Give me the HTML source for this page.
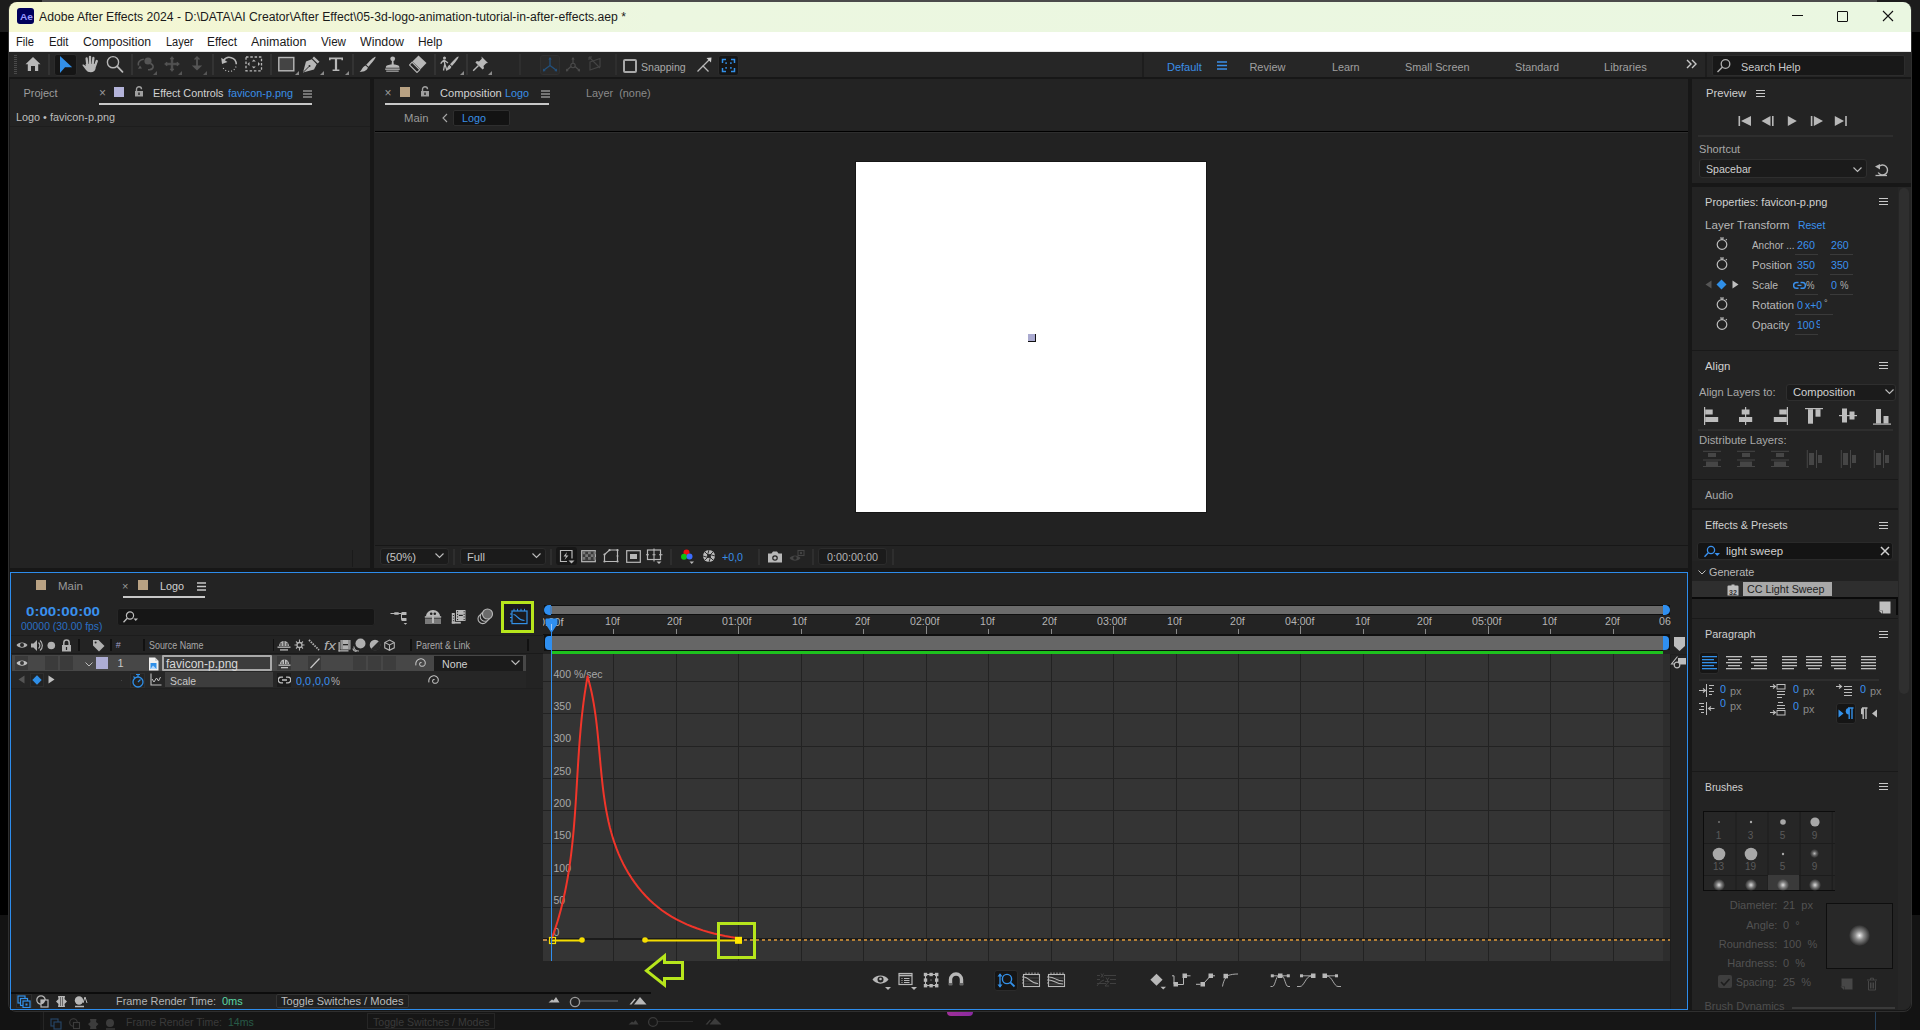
<!DOCTYPE html><html><head><meta charset="utf-8"><title>AE</title><style>*{margin:0;padding:0;box-sizing:border-box}
html,body{width:1920px;height:1030px;overflow:hidden;background:#000}
body{position:relative;font-family:"Liberation Sans",sans-serif}
body>div,body>span,body>svg{position:absolute}
span{white-space:pre}
</style></head><body>
<div style="left:0px;top:0px;width:1920px;height:1030px;background:#000;"></div>
<div style="left:0px;top:0px;width:1920px;height:32px;background:#1c1c1c;"></div>
<div style="left:42px;top:0px;width:1835px;height:2px;background:#4b4b4b;"></div>
<div style="left:0px;top:915px;width:1920px;height:115px;background:#131313;"></div>
<div style="left:40px;top:1012px;width:1860px;height:18px;background:#161616;"></div>
<div style="left:43px;top:1012px;width:1px;height:18px;background:#262626;"></div>
<svg style="left:50px;top:1018px;" width="14" height="12" viewBox="0 0 14 12"><rect x="1" y="1" width="7" height="7" fill="none" stroke="#27476a" stroke-width="1.1"/><rect x="4" y="4" width="7" height="7" fill="#171717" stroke="#27476a" stroke-width="1.1"/></svg>
<svg style="left:69px;top:1018px;" width="12" height="12" viewBox="0 0 12 12"><circle cx="4.5" cy="4.5" r="3.8" fill="none" stroke="#3c3c3c" stroke-width="1.1"/><rect x="4.5" y="4.5" width="6" height="6" fill="#171717" stroke="#3c3c3c" stroke-width="1.1"/></svg>
<svg style="left:87px;top:1018px;" width="12" height="12" viewBox="0 0 12 12"><path d="M3 1L3.5 4L1 6L3.5 8.5L3 11H9.5L9 8.5L11.5 6L9 4L9.5 1Z" fill="#3c3c3c"/></svg>
<svg style="left:105px;top:1018px;" width="13" height="12" viewBox="0 0 13 12"><circle cx="5" cy="5" r="4" fill="#3c3c3c"/><path d="M1 11H10" stroke="#3c3c3c" stroke-width="1.4"/></svg>
<span style="left:126.00px;top:1017.19px;font-size:11px;line-height:11px;color:#3a3a3a;transform:scaleX(0.9517);transform-origin:0 0;">Frame Render Time:</span>
<span style="left:227.60px;top:1017.19px;font-size:11px;line-height:11px;color:#285a47;transform:scaleX(0.9591);transform-origin:0 0;">14ms</span>
<div style="left:367px;top:1013px;width:127.6px;height:16px;background:none;border:1px solid #262626"></div>
<span style="left:373.40px;top:1017.19px;font-size:11px;line-height:11px;color:#3a3a3a;transform:scaleX(0.9583);transform-origin:0 0;">Toggle Switches / Modes</span>
<svg style="left:628px;top:1019px;" width="11" height="6" viewBox="0 0 11 6"><path d="M0.5 5.5L4 2.5L5.5 3.5L7.5 1L10.5 5.5Z" fill="#3c3c3c"/></svg>
<div style="left:657px;top:1021px;width:36px;height:1.2px;background:#2a2a2a;"></div>
<svg style="left:647px;top:1016px;" width="12" height="12" viewBox="0 0 12 12"><circle cx="6" cy="6" r="4.4" fill="#171717" stroke="#3a3a3a" stroke-width="1.3"/></svg>
<svg style="left:705px;top:1017px;" width="17" height="8" viewBox="0 0 17 8"><path d="M0.5 7.5L5 2.5L6 3.2L2.5 7.5Z M4.5 7.5L10 1L16.5 7.5Z" fill="#3c3c3c"/></svg>
<div style="left:1875px;top:1010px;width:1px;height:20px;background:#26405a;"></div>
<div style="left:8px;top:2px;width:1904px;height:1010px;background:#171717;border:1px solid #2f2f2f;border-radius:8px"></div>
<div style="left:947px;top:1012px;width:26px;height:4px;border-radius:0 0 13px 13px;background:linear-gradient(90deg,#a0309a,#8a2aa0)"></div>
<div style="left:9px;top:2px;width:1902px;height:30px;background:linear-gradient(90deg,#f5f7d1 0%,#f1f6d7 16%,#ecf7e0 34%,#eaf7e1 100%);border-radius:8px 8px 0 0"></div>
<div style="left:17px;top:8px;width:17px;height:16px;background:#00005b;border-radius:3px"></div>
<span style="left:19.50px;top:12.46px;font-size:9.5px;line-height:9.5px;color:#9999ff;font-weight:bold;transform:scaleX(1.0705);transform-origin:0 0;">Ae</span>
<span style="left:39.00px;top:11.34px;font-size:12px;line-height:12px;color:#1a1a1a;transform:scaleX(1.0158);transform-origin:0 0;">Adobe After Effects 2024 - D:\DATA\AI Creator\After Effect\05-3d-logo-animation-tutorial-in-after-effects.aep *</span>
<div style="left:1792px;top:15px;width:11px;height:1px;background:#111;"></div>
<div style="left:1837px;top:11px;width:11px;height:11px;background:none;border:1px solid #111;border-radius:1px"></div>
<svg style="left:1882px;top:10px;" width="12" height="12" viewBox="0 0 12 12"><path d="M1 1L11 11M11 1L1 11" stroke="#111" stroke-width="1.1"/></svg>
<div style="left:9px;top:32px;width:1902px;height:19px;background:#ffffff;"></div>
<div style="left:9px;top:51px;width:1902px;height:1px;background:#e6e6e6;"></div>
<span style="left:16.00px;top:36.34px;font-size:12px;line-height:12px;color:#1a1a1a;transform:scaleX(0.9309);transform-origin:0 0;">File</span>
<span style="left:48.50px;top:36.34px;font-size:12px;line-height:12px;color:#1a1a1a;transform:scaleX(0.9430);transform-origin:0 0;">Edit</span>
<span style="left:82.50px;top:36.34px;font-size:12px;line-height:12px;color:#1a1a1a;transform:scaleX(1.0195);transform-origin:0 0;">Composition</span>
<span style="left:165.50px;top:36.34px;font-size:12px;line-height:12px;color:#1a1a1a;transform:scaleX(0.9161);transform-origin:0 0;">Layer</span>
<span style="left:207.00px;top:36.34px;font-size:12px;line-height:12px;color:#1a1a1a;transform:scaleX(0.9848);transform-origin:0 0;">Effect</span>
<span style="left:251.00px;top:36.34px;font-size:12px;line-height:12px;color:#1a1a1a;transform:scaleX(1.0400);transform-origin:0 0;">Animation</span>
<span style="left:321.00px;top:36.34px;font-size:12px;line-height:12px;color:#1a1a1a;transform:scaleX(0.9692);transform-origin:0 0;">View</span>
<span style="left:360.00px;top:36.34px;font-size:12px;line-height:12px;color:#1a1a1a;transform:scaleX(1.0309);transform-origin:0 0;">Window</span>
<span style="left:418.00px;top:36.34px;font-size:12px;line-height:12px;color:#1a1a1a;transform:scaleX(0.9927);transform-origin:0 0;">Help</span>
<div style="left:9px;top:52px;width:1902px;height:25px;background:#262626;"></div>
<svg style="left:14px;top:55px;" width="3" height="20" viewBox="0 0 3 20"><rect x="0" y="0" width="3" height="1" fill="#4a4a4a"/><rect x="0" y="2" width="3" height="1" fill="#4a4a4a"/><rect x="0" y="4" width="3" height="1" fill="#4a4a4a"/><rect x="0" y="6" width="3" height="1" fill="#4a4a4a"/><rect x="0" y="8" width="3" height="1" fill="#4a4a4a"/><rect x="0" y="10" width="3" height="1" fill="#4a4a4a"/><rect x="0" y="12" width="3" height="1" fill="#4a4a4a"/><rect x="0" y="14" width="3" height="1" fill="#4a4a4a"/><rect x="0" y="16" width="3" height="1" fill="#4a4a4a"/><rect x="0" y="18" width="3" height="1" fill="#4a4a4a"/></svg>
<svg style="left:25px;top:56px;" width="16" height="16" viewBox="0 0 16 16"><path d="M8 1L0.5 8.2H2.8V15H6V10H10V15H13.2V8.2H15.5Z" fill="#b8b8b8"/></svg>
<div style="left:48px;top:54px;width:2px;height:21px;background:#333;"></div>
<div style="left:53.75px;top:53.6px;width:22.75px;height:22px;background:#151515;border:1px solid #2b2b2b;border-radius:3px"></div>
<svg style="left:59px;top:55px;" width="14" height="19" viewBox="0 0 14 19"><path d="M1 1L13.2 12.3H6L1 18Z" fill="#3390e8"/></svg>
<svg style="left:81px;top:55px;" width="18" height="18" viewBox="0 0 18 18"><path d="M5.6 3.5L6.4 10M9 1.8V10M12.4 2.8L11.6 10M15.8 6L14 11" stroke="#b8b8b8" stroke-width="2.3" stroke-linecap="round" fill="none"/><path d="M4.5 9H15L14.6 13.5C14 16 12.5 17.3 9.8 17.3C7.5 17.3 6 16.5 4.8 14.8L1.6 10.6C1.2 10 1.8 9.2 2.6 9.6L4.8 11Z" fill="#b8b8b8"/></svg>
<svg style="left:105px;top:55px;" width="19" height="19" viewBox="0 0 19 19"><circle cx="8" cy="7.2" r="5.6" fill="none" stroke="#b8b8b8" stroke-width="1.4"/><path d="M12.2 11.4L17.5 16.8" stroke="#b8b8b8" stroke-width="1.8" stroke-linecap="round"/></svg>
<div style="left:131px;top:54px;width:2px;height:21px;background:#333;"></div>
<svg style="left:137px;top:56px;" width="20" height="16" viewBox="0 0 20 16"><circle cx="11" cy="5" r="3.6" fill="#555555"/><path d="M6.8 3.2C3 3.6 0.5 6 1.6 9.4" fill="none" stroke="#555555" stroke-width="1.6"/><path d="M3 9.5L5 12.5L1 12.8Z" fill="#555555"/><path d="M13.5 7.5C17 9 17.4 13 12.5 13.8H11" fill="none" stroke="#555555" stroke-width="1.6"/></svg>
<svg style="left:153px;top:71px;" width="4" height="4" viewBox="0 0 4 4"><path d="M4 0V4H0Z" fill="#555"/></svg>
<svg style="left:164px;top:56px;" width="16" height="16" viewBox="0 0 16 16"><path d="M8 0.5L10 3H8.8V7.2H13V6L15.5 8L13 10V8.8H8.8V13H10L8 15.5L6 13H7.2V8.8H3V10L0.5 8L3 6V7.2H7.2V3H6Z" fill="#555555" stroke="#555555" stroke-width="0.6"/></svg>
<svg style="left:178px;top:71px;" width="4" height="4" viewBox="0 0 4 4"><path d="M4 0V4H0Z" fill="#555"/></svg>
<svg style="left:191px;top:56px;" width="12" height="16" viewBox="0 0 12 16"><path d="M3.5 3.5L6 1L8.5 3.5" stroke="#555555" stroke-width="1.4" fill="none"/><path d="M6 1V10" stroke="#555555" stroke-width="1.8"/><path d="M0.8 9.5H11.2L6 14.5Z" fill="#555555"/></svg>
<svg style="left:203px;top:71px;" width="4" height="4" viewBox="0 0 4 4"><path d="M4 0V4H0Z" fill="#555"/></svg>
<div style="left:212px;top:54px;width:2px;height:21px;background:#333;"></div>
<svg style="left:220px;top:55px;" width="19" height="19" viewBox="0 0 19 19"><path d="M3.5 5.5A7 7 0 0 1 16.3 9.2" fill="none" stroke="#b8b8b8" stroke-width="1.5"/><path d="M1.2 2.8L2 9L7.5 7Z" fill="#b8b8b8"/><path d="M16 11.5A7 7 0 0 1 3 12.5" fill="none" stroke="#b8b8b8" stroke-width="1.2" stroke-dasharray="1 2"/></svg>
<svg style="left:245px;top:56px;" width="18" height="16" viewBox="0 0 18 16"><rect x="1" y="1" width="15.5" height="13.8" fill="none" stroke="#b8b8b8" stroke-width="1.3" stroke-dasharray="2.5 1.8"/><path d="M8.8 3.5L10.8 5.5H6.8Z M8.8 12.5L10.8 10.5H6.8Z M2.5 8L4.5 6V10Z M15 8L13 6V10Z" fill="#b8b8b8"/></svg>
<div style="left:270px;top:54px;width:2px;height:21px;background:#333;"></div>
<svg style="left:277px;top:56px;" width="18" height="16" viewBox="0 0 18 16"><rect x="1.8" y="1.5" width="15" height="13.3" fill="#444" stroke="#b8b8b8" stroke-width="1.4"/></svg>
<svg style="left:295px;top:71px;" width="4" height="4" viewBox="0 0 4 4"><path d="M4 0V4H0Z" fill="#8a8a8a"/></svg>
<svg style="left:302px;top:56px;" width="19" height="17" viewBox="0 0 19 17"><path d="M12 0.5L17.5 5.8L15.7 7.6L10.3 2.3Z" fill="#b8b8b8"/><path d="M9.8 3.3L14.7 8.2L12 13.5L1 16.5L4 5.5Z" fill="#b8b8b8"/><path d="M1.5 16L7 10.5" stroke="#262626" stroke-width="1"/><circle cx="7.5" cy="10" r="1" fill="#262626"/></svg>
<svg style="left:320px;top:71px;" width="4" height="4" viewBox="0 0 4 4"><path d="M4 0V4H0Z" fill="#8a8a8a"/></svg>
<svg style="left:328px;top:56px;" width="16" height="16" viewBox="0 0 16 16"><path d="M1 1.5H15V4.3H13.4V3.2H9.1V13.4H11.4V15H4.6V13.4H6.9V3.2H2.6V4.3H1Z" fill="#b8b8b8"/></svg>
<svg style="left:345px;top:71px;" width="4" height="4" viewBox="0 0 4 4"><path d="M4 0V4H0Z" fill="#8a8a8a"/></svg>
<div style="left:352px;top:54px;width:2px;height:21px;background:#333;"></div>
<svg style="left:359px;top:56px;" width="18" height="17" viewBox="0 0 18 17"><path d="M16.5 0.8C17.5 1.5 12 8 9.5 10.8L7.2 8.8C9.8 6 15.5 0 16.5 0.8Z" fill="#b8b8b8"/><path d="M6.5 9.5L8.9 11.5C8.2 14 6 15.8 0.5 16C2.5 14.8 3 11.3 6.5 9.5Z" fill="#b8b8b8"/></svg>
<svg style="left:384px;top:56px;" width="18" height="16" viewBox="0 0 18 16"><circle cx="8.7" cy="2.8" r="2.4" fill="#b8b8b8"/><path d="M8 4.5H9.4L9.8 8.5C12.5 8.8 15.5 8.8 15.5 11.8H1.8C1.8 8.8 5 8.8 7.6 8.5Z" fill="#b8b8b8"/><rect x="1.2" y="12.5" width="14.5" height="1.3" fill="#b8b8b8"/><rect x="2.2" y="14.6" width="12.5" height="1.1" fill="#b8b8b8"/></svg>
<svg style="left:409px;top:55px;" width="19" height="18" viewBox="0 0 19 18"><path d="M9.5 0.5L17.5 8L11.5 14.2L3.4 6.6Z" fill="#b8b8b8"/><path d="M3 7.2L10.8 14.8L8 17.5L0.5 10Z" fill="none" stroke="#b8b8b8" stroke-width="1.1"/></svg>
<div style="left:434px;top:54px;width:2px;height:21px;background:#333;"></div>
<svg style="left:439px;top:56px;" width="22" height="17" viewBox="0 0 22 17"><circle cx="5.5" cy="2" r="1.5" fill="#b8b8b8"/><path d="M5 4L2.5 6.5L1.8 7.8M5 4L5.8 8L4.5 14.5M5.8 8L8 14.5M5 4L9 7" fill="none" stroke="#b8b8b8" stroke-width="1.3"/><path d="M19.5 0.5C20.5 1.2 15.5 7.5 13 10L11 8.2C13.5 5.5 18.5 -0.2 19.5 0.5Z" fill="#b8b8b8"/><path d="M10.3 8.8L12.4 10.7C11.8 13 9.8 14 6.8 14.5C8.5 13 8 10.5 10.3 8.8Z" fill="#b8b8b8"/></svg>
<svg style="left:460px;top:71px;" width="4" height="4" viewBox="0 0 4 4"><path d="M4 0V4H0Z" fill="#8a8a8a"/></svg>
<div style="left:466px;top:54px;width:2px;height:21px;background:#333;"></div>
<svg style="left:472px;top:56px;" width="17" height="16" viewBox="0 0 17 16"><path d="M9.5 0.5L16 7L14.2 7.2L11.5 10L12 12.2L10.6 13.6L3.4 6.4L4.8 5L7 5.5L9.8 2.8Z" fill="#b8b8b8"/><path d="M6.5 9.5L1.2 14.8" stroke="#b8b8b8" stroke-width="1.4"/></svg>
<svg style="left:488px;top:71px;" width="4" height="4" viewBox="0 0 4 4"><path d="M4 0V4H0Z" fill="#8a8a8a"/></svg>
<div style="left:519px;top:54px;width:2px;height:21px;background:#2e2e2e;"></div>
<div style="left:540px;top:55px;width:20.4px;height:20px;background:#2a2a2a;border:1px solid #303030;border-radius:3px"></div>
<svg style="left:541px;top:56px;" width="18" height="18" viewBox="0 0 18 18"><path d="M9 2V9.5M9 9.5L3 14M9 9.5L15 14" stroke="#23507c" stroke-width="1.3" fill="none"/><path d="M7.3 3.5L9 1L10.7 3.5Z M2 12.5L2 15.5L4.8 15Z M16 12.5L16 15.5L13.2 15Z" fill="#23507c"/></svg>
<svg style="left:564px;top:56px;" width="18" height="18" viewBox="0 0 18 18"><path d="M9 2V7.5M7 10.5L3 14M11 10.5L15 14" stroke="#4a4a4a" stroke-width="1.2" fill="none"/><circle cx="9" cy="9.5" r="2.2" fill="none" stroke="#4a4a4a" stroke-width="1.1"/><path d="M7.3 3.5L9 1L10.7 3.5Z M2 12.5L2 15.5L4.8 15Z M16 12.5L16 15.5L13.2 15Z" fill="#4a4a4a"/></svg>
<svg style="left:588px;top:56px;" width="16" height="16" viewBox="0 0 16 16"><path d="M2 6L12 2.5V10.5L2 14Z" fill="none" stroke="#444" stroke-width="1.1"/><path d="M1 1L12 12M1 1V4M1 1H4" stroke="#444" stroke-width="1.1" fill="none"/></svg>
<div style="left:615px;top:54px;width:2px;height:21px;background:#2e2e2e;"></div>
<div style="left:623.4px;top:59px;width:13.6px;height:13.5px;background:none;border:2px solid #a8a8a8;border-radius:2px"></div>
<span style="left:641.00px;top:61.99px;font-size:11px;line-height:11px;color:#a8a8a8;transform:scaleX(0.9615);transform-origin:0 0;">Snapping</span>
<svg style="left:696px;top:56px;" width="17" height="17" viewBox="0 0 17 17"><path d="M1.5 15.5L7 10L12.5 15.5" stroke="#b8b8b8" stroke-width="1.3" fill="none"/><path d="M7 10L14 3" stroke="#b8b8b8" stroke-width="1.2"/><path d="M10.5 2L15.5 1.5L15 6.5Z" fill="#d0d0d0"/></svg>
<div style="left:718px;top:55px;width:21px;height:21px;background:#151515;border:1px solid #2b2b2b;border-radius:3px"></div>
<svg style="left:721px;top:58px;" width="15" height="15" viewBox="0 0 15 15"><path d="M1.5 5V1.5H5M10 1.5H13.5V5M13.5 10V13.5H10M5 13.5H1.5V10" stroke="#3390e8" stroke-width="1.5" fill="none"/><rect x="4.3" y="4.3" width="1.6" height="1.6" fill="#3390e8"/><rect x="9.1" y="4.3" width="1.6" height="1.6" fill="#3390e8"/><rect x="4.3" y="9.1" width="1.6" height="1.6" fill="#3390e8"/><rect x="9.1" y="9.1" width="1.6" height="1.6" fill="#3390e8"/></svg>
<div style="left:1142px;top:53px;width:2px;height:24px;background:#1d1d1d;"></div>
<span style="left:1167.00px;top:61.69px;font-size:11px;line-height:11px;color:#3b8fe8;">Default</span>
<svg style="left:1217px;top:61px;" width="10" height="9" viewBox="0 0 10 9"><path d="M0 1H10M0 4.5H10M0 8H10" stroke="#3b8fe8" stroke-width="1.3"/></svg>
<span style="left:1249.40px;top:61.69px;font-size:11px;line-height:11px;color:#a0a0a0;">Review</span>
<span style="left:1332.40px;top:61.69px;font-size:11px;line-height:11px;color:#a0a0a0;transform:scaleX(0.9810);transform-origin:0 0;">Learn</span>
<span style="left:1405.00px;top:61.69px;font-size:11px;line-height:11px;color:#a0a0a0;transform:scaleX(0.9860);transform-origin:0 0;">Small Screen</span>
<span style="left:1515.00px;top:61.69px;font-size:11px;line-height:11px;color:#a0a0a0;transform:scaleX(0.9855);transform-origin:0 0;">Standard</span>
<span style="left:1604.00px;top:61.69px;font-size:11px;line-height:11px;color:#a0a0a0;transform:scaleX(1.0145);transform-origin:0 0;">Libraries</span>
<svg style="left:1686px;top:59px;" width="12" height="10" viewBox="0 0 12 10"><path d="M1 1L5 5L1 9M6 1L10 5L6 9" stroke="#c8c8c8" stroke-width="1.4" fill="none"/></svg>
<div style="left:1705px;top:53px;width:2px;height:24px;background:#1d1d1d;"></div>
<div style="left:1712px;top:55px;width:193px;height:21px;background:#181818;border:1px solid #2c2c2c;border-radius:2px"></div>
<svg style="left:1716px;top:58px;" width="16" height="16" viewBox="0 0 16 16"><circle cx="9.5" cy="6" r="4.3" fill="none" stroke="#b0b0b0" stroke-width="1.3"/><path d="M6.5 9L1.5 14" stroke="#b0b0b0" stroke-width="1.5"/></svg>
<span style="left:1741.00px;top:61.69px;font-size:11px;line-height:11px;color:#c8c8c8;transform:scaleX(0.9829);transform-origin:0 0;">Search Help</span>
<div style="left:10px;top:79px;width:360px;height:489px;background:#232323;"></div>
<span style="left:23.40px;top:87.99px;font-size:11px;line-height:11px;color:#9c9c9c;">Project</span>
<span style="left:99.00px;top:87.34px;font-size:12px;line-height:12px;color:#9a9a9a;">×</span>
<div style="left:114px;top:87px;width:10px;height:10px;background:#b3b3d9;"></div>
<span style="left:153.00px;top:88.19px;font-size:11px;line-height:11px;color:#d2d2d2;transform:scaleX(0.9800);transform-origin:0 0;">Effect Controls</span>
<span style="left:228.00px;top:88.19px;font-size:11px;line-height:11px;color:#3a8fe6;transform:scaleX(0.9842);transform-origin:0 0;">favicon-p.png</span>
<div style="left:99px;top:103px;width:213px;height:2px;background:#c8c8c8;"></div>
<span style="left:16.00px;top:111.99px;font-size:11px;line-height:11px;color:#bdbdbd;transform:scaleX(0.9853);transform-origin:0 0;">Logo • favicon-p.png</span>
<div style="left:10px;top:126px;width:360px;height:1px;background:#1d1d1d;"></div>
<div style="left:374px;top:79px;width:1314px;height:489px;background:#232323;"></div>
<span style="left:384.50px;top:87.34px;font-size:12px;line-height:12px;color:#9a9a9a;">×</span>
<div style="left:400px;top:87px;width:10px;height:10px;background:#b9a283;"></div>
<span style="left:439.50px;top:88.19px;font-size:11px;line-height:11px;color:#d2d2d2;transform:scaleX(1.0100);transform-origin:0 0;">Composition</span>
<span style="left:505.00px;top:88.19px;font-size:11px;line-height:11px;color:#3a8fe6;transform:scaleX(0.9807);transform-origin:0 0;">Logo</span>
<div style="left:385px;top:103px;width:164px;height:2px;background:#c8c8c8;"></div>
<span style="left:586.40px;top:88.19px;font-size:11px;line-height:11px;color:#8a8a8a;transform:scaleX(0.9874);transform-origin:0 0;">Layer  (none)</span>
<span style="left:403.60px;top:112.94px;font-size:11px;line-height:11px;color:#9a9a9a;transform:scaleX(1.0233);transform-origin:0 0;">Main</span>
<div style="left:453px;top:110px;width:57px;height:16px;background:#131313;border:1px solid #2e2e2e;border-radius:2px"></div>
<span style="left:462.00px;top:112.94px;font-size:11px;line-height:11px;color:#3a8fe6;transform:scaleX(0.9807);transform-origin:0 0;">Logo</span>
<div style="left:375px;top:131px;width:1313px;height:1px;background:#000;"></div>
<div style="left:375px;top:132px;width:1313px;height:1px;background:#2e2e2e;"></div>
<div style="left:374px;top:133px;width:1314px;height:412px;background:#222222;"></div>
<div style="left:855px;top:161px;width:352px;height:352px;background:#161616;"></div>
<div style="left:856px;top:162px;width:350px;height:350px;background:#ffffff;"></div>
<div style="left:1028px;top:334px;width:8px;height:8px;background:#aaaad0;border-right:1px solid #111;border-bottom:1px solid #111"></div>
<div style="left:375px;top:545px;width:1313px;height:1px;background:#171717;"></div>
<div style="left:352px;top:550px;width:1px;height:17px;background:#1a1a1a;"></div>
<div style="left:379.5px;top:547.75px;width:69px;height:17.6px;background:#1b1b1b;border:1px solid #2c2c2c;border-radius:3px"></div>
<span style="left:386.00px;top:551.69px;font-size:11px;line-height:11px;color:#c4c4c4;transform:scaleX(1.0224);transform-origin:0 0;">(50%)</span>
<div style="left:459.6px;top:547.75px;width:86px;height:17.6px;background:#1b1b1b;border:1px solid #2c2c2c;border-radius:3px"></div>
<span style="left:467.00px;top:551.69px;font-size:11px;line-height:11px;color:#c4c4c4;transform:scaleX(1.0155);transform-origin:0 0;">Full</span>
<span style="left:721.50px;top:551.69px;font-size:11px;line-height:11px;color:#3a8fe6;transform:scaleX(0.9670);transform-origin:0 0;">+0,0</span>
<div style="left:818px;top:547.75px;width:69px;height:17.6px;background:#1b1b1b;border:1px solid #2c2c2c;border-radius:3px"></div>
<span style="left:827.00px;top:551.69px;font-size:11px;line-height:11px;color:#b4b4b4;transform:scaleX(0.9809);transform-origin:0 0;">0:00:00:00</span>
<div style="left:10px;top:572px;width:1678px;height:438px;background:#232323;border:1px solid #2d8ceb"></div>
<div style="left:36px;top:580px;width:10px;height:10px;background:#b9a283;"></div>
<span style="left:58.30px;top:581.19px;font-size:11px;line-height:11px;color:#9a9a9a;transform:scaleX(1.0401);transform-origin:0 0;">Main</span>
<span style="left:122.00px;top:581.19px;font-size:11px;line-height:11px;color:#9a9a9a;">×</span>
<div style="left:138px;top:580px;width:10px;height:10px;background:#b9a283;"></div>
<span style="left:160.00px;top:581.19px;font-size:11px;line-height:11px;color:#d0d0d0;transform:scaleX(0.9807);transform-origin:0 0;">Logo</span>
<svg style="left:197px;top:582px;" width="9" height="9" viewBox="0 0 9 9"><path d="M0 1H9M0 4.5H9M0 8H9" stroke="#c8c8c8" stroke-width="1.3"/></svg>
<div style="left:122.8px;top:596px;width:82.2px;height:2px;background:#c8c8c8;"></div>
<span style="left:26.00px;top:604.67px;font-size:13.5px;line-height:13.5px;color:#3a91ee;font-weight:bold;transform:scaleX(1.1204);transform-origin:0 0;">0:00:00:00</span>
<span style="left:20.80px;top:620.69px;font-size:11px;line-height:11px;color:#2a6fc4;transform:scaleX(0.9452);transform-origin:0 0;">00000 (30.00 fps)</span>
<div style="left:117px;top:607.5px;width:258px;height:18.5px;background:#161616;border:1px solid #262626;border-radius:3px"></div>
<svg style="left:122px;top:610px;" width="18" height="14" viewBox="0 0 18 14"><circle cx="8" cy="5.5" r="3.6" fill="none" stroke="#bdbdbd" stroke-width="1.2"/><path d="M5.3 8.3L1.5 12.3" stroke="#bdbdbd" stroke-width="1.3"/><path d="M11.5 8.5H16L13.75 11Z" fill="#bdbdbd"/></svg>
<svg style="left:390px;top:609px;" width="20" height="16" viewBox="0 0 20 16"><path d="M1 4.5H5M9 4.5H11.5V10.5H14" stroke="#b8b8b8" stroke-width="1" fill="none"/><rect x="4" y="3.2" width="5" height="2.6" rx="1" fill="#b8b8b8"/><rect x="11.5" y="3" width="5" height="3" rx="0.6" fill="#b8b8b8"/><rect x="11.5" y="9" width="5" height="3" rx="0.6" fill="#b8b8b8"/><path d="M13.6 14H17.2L15.4 15.8Z" fill="#b8b8b8"/><rect x="0.5" y="4" width="1.5" height="1" fill="#b8b8b8"/></svg>
<svg style="left:424px;top:609px;" width="18" height="17" viewBox="0 0 18 17"><path d="M2 7.5C2 4 5 1 9 1C13 1 16 4 16 7.5Z" fill="#b8b8b8"/><circle cx="7.2" cy="4.8" r="1.3" fill="#232323"/><circle cx="10.8" cy="4.8" r="1.3" fill="#232323"/><rect x="0.8" y="7.2" width="16.4" height="1.5" fill="#b8b8b8"/><rect x="1" y="9.5" width="16" height="5.5" fill="#7a7a7a"/><rect x="8" y="6" width="2" height="8" fill="#b8b8b8"/></svg>
<svg style="left:451px;top:609px;" width="16" height="16" viewBox="0 0 16 16"><rect x="0.8" y="4" width="3" height="10.5" fill="#b8b8b8"/><rect x="0.8" y="12.8" width="9" height="1.8" fill="#b8b8b8"/><rect x="5" y="1" width="9.5" height="11" fill="#b8b8b8"/><rect x="6" y="2.2" width="1.1" height="1.1" fill="#232323"/><rect x="12.6" y="2.2" width="1.1" height="1.1" fill="#232323"/><rect x="6" y="4.800000000000001" width="1.1" height="1.1" fill="#232323"/><rect x="12.6" y="4.800000000000001" width="1.1" height="1.1" fill="#232323"/><rect x="6" y="7.4" width="1.1" height="1.1" fill="#232323"/><rect x="12.6" y="7.4" width="1.1" height="1.1" fill="#232323"/><rect x="6" y="10.0" width="1.1" height="1.1" fill="#232323"/><rect x="12.6" y="10.0" width="1.1" height="1.1" fill="#232323"/><rect x="1.9" y="6.0" width="1" height="1" fill="#232323"/><rect x="1.9" y="8.6" width="1" height="1" fill="#232323"/><rect x="1.9" y="11.2" width="1" height="1" fill="#232323"/><rect x="7.8" y="5.8" width="4" height="1.2" fill="#232323"/></svg>
<svg style="left:477px;top:608px;" width="17" height="17" viewBox="0 0 17 17"><circle cx="5.8" cy="10.8" r="4.8" fill="#232323" stroke="#b8b8b8" stroke-width="1.1"/><circle cx="8" cy="8.5" r="4.8" fill="#232323" stroke="#b8b8b8" stroke-width="1.1"/><circle cx="10.5" cy="6" r="5" fill="#6a6a6a" stroke="#b8b8b8" stroke-width="1.1"/></svg>
<div style="left:501px;top:601.4px;width:32.5px;height:31.2px;background:#1b1b20;border:3px solid #b7e61c"></div>
<svg style="left:509px;top:608px;" width="20" height="17" viewBox="0 0 20 17"><rect x="3" y="3" width="15" height="12.6" fill="none" stroke="#3390e8" stroke-width="1.2"/><path d="M5 0.8V3M8.5 0.8V3M12 0.8V3M15.5 0.8V3M1 6H3M1 9.5H3M1 13H3" stroke="#3390e8" stroke-width="1"/><path d="M4.5 6.5C8 6.5 9 12.5 15.5 12.5" fill="none" stroke="#3390e8" stroke-width="1.1"/></svg>
<div style="left:11px;top:635px;width:532px;height:1px;background:#1c1c1c;"></div>
<svg style="left:16px;top:640px;" width="12" height="10" viewBox="0 0 12 10"><path d="M0.5 5C2.5 1.5 9.5 1.5 11.5 5C9.5 8.5 2.5 8.5 0.5 5Z" fill="#b0b0b0"/><circle cx="6" cy="5" r="2" fill="#262626"/></svg>
<svg style="left:30px;top:639px;" width="13" height="13" viewBox="0 0 13 13"><path d="M1 4.5H3.5L7 1V12L3.5 8.5H1Z" fill="#b0b0b0"/><path d="M8.5 3.5A4 4 0 0 1 8.5 9.5M10 1.5A6.5 6.5 0 0 1 10 11.5" fill="none" stroke="#b0b0b0" stroke-width="1.2"/></svg>
<svg style="left:47px;top:641px;" width="9" height="9" viewBox="0 0 9 9"><circle cx="4.3" cy="4.5" r="3.8" fill="#b0b0b0"/></svg>
<svg style="left:61px;top:639px;" width="11" height="13" viewBox="0 0 11 13"><path d="M2.8 6V3.8A2.7 2.7 0 0 1 8.2 3.8V6" fill="none" stroke="#b0b0b0" stroke-width="1.5"/><rect x="1" y="6" width="9" height="6.5" fill="#b0b0b0"/><path d="M5.5 8V11" stroke="#262626" stroke-width="1.2"/></svg>
<div style="left:78px;top:639px;width:1.5px;height:12px;background:#111;"></div>
<svg style="left:92px;top:639px;" width="13" height="13" viewBox="0 0 13 13"><path d="M1 1H6.5L12.5 7L7 12.5L1 6.5Z" fill="#b0b0b0"/><circle cx="3.6" cy="3.6" r="1" fill="#262626"/></svg>
<div style="left:110px;top:639px;width:1.5px;height:12px;background:#111;"></div>
<span style="left:115.80px;top:641.38px;font-size:9px;line-height:9px;color:#a0a0c8;">#</span>
<div style="left:143px;top:639px;width:1.5px;height:12px;background:#111;"></div>
<span style="left:148.50px;top:640.19px;font-size:11px;line-height:11px;color:#a8a8a8;transform:scaleX(0.8104);transform-origin:0 0;">Source Name</span>
<div style="left:272.5px;top:639px;width:1.5px;height:12px;background:#111;"></div>
<svg style="left:277px;top:639px;" width="14" height="13" viewBox="0 0 14 13"><path d="M2 7A5 5 0 0 1 12 7Z" fill="#b0b0b0"/><path d="M7 2V12M4 4V7M10 4V7" stroke="#262626" stroke-width="0.9"/><rect x="0.5" y="7.5" width="13" height="1.4" fill="#b0b0b0"/><rect x="3" y="10.2" width="8" height="1.4" fill="#b0b0b0"/></svg>
<svg style="left:294px;top:639px;" width="11" height="12" viewBox="0 0 11 12"><circle cx="5.5" cy="6" r="2.5" fill="none" stroke="#b0b0b0" stroke-width="1.3"/><path d="M5.5 0.5V3M5.5 9V11.5M0.5 6H3M8 6H10.5M2 2.5L3.7 4.2M7.3 7.8L9 9.5M9 2.5L7.3 4.2M3.7 7.8L2 9.5" stroke="#b0b0b0" stroke-width="1.1"/></svg>
<svg style="left:308px;top:639px;" width="12" height="12" viewBox="0 0 12 12"><path d="M1 1L11 11" stroke="#b0b0b0" stroke-width="1.8" stroke-dasharray="1.6 1"/></svg>
<span style="left:323.50px;top:639.84px;font-size:12px;line-height:12px;color:#b0b0b0;font-style:italic;transform:scaleX(1.2857);transform-origin:0 0;">fx</span>
<svg style="left:338px;top:639px;" width="13" height="13" viewBox="0 0 13 13"><rect x="2.5" y="1" width="10" height="9.5" fill="#b0b0b0"/><rect x="0.5" y="3" width="1.3" height="9.5" fill="#b0b0b0"/><rect x="0.5" y="11.2" width="10" height="1.3" fill="#b0b0b0"/><rect x="5" y="5" width="5" height="1.3" fill="#262626"/><path d="M4 1.5V10M11 1.5V10" stroke="#262626" stroke-width="0.9" stroke-dasharray="1 1"/></svg>
<svg style="left:352px;top:638px;" width="14" height="14" viewBox="0 0 14 14"><circle cx="8.5" cy="5.5" r="5" fill="#b0b0b0"/><path d="M1.8 8.5A5 5 0 0 0 7 13M0.8 10.5A4 4 0 0 0 4.5 13.5" fill="none" stroke="#b0b0b0" stroke-width="1.1"/></svg>
<svg style="left:369px;top:639px;" width="12" height="12" viewBox="0 0 12 12"><circle cx="6" cy="6" r="5.3" fill="#b0b0b0"/><path d="M10 2L2 10A5.3 5.3 0 0 0 10 2Z" fill="#262626"/></svg>
<svg style="left:384px;top:639px;" width="11" height="12" viewBox="0 0 11 12"><path d="M5.5 1L10.3 3.5V8.8L5.5 11.3L0.7 8.8V3.5Z M0.7 3.5L5.5 6L10.3 3.5M5.5 6V11.3" fill="none" stroke="#b0b0b0" stroke-width="1.1"/></svg>
<div style="left:410px;top:639px;width:1.5px;height:12px;background:#111;"></div>
<span style="left:416.00px;top:639.89px;font-size:11px;line-height:11px;color:#a8a8a8;transform:scaleX(0.8177);transform-origin:0 0;">Parent &amp; Link</span>
<div style="left:527px;top:639px;width:1.5px;height:12px;background:#111;"></div>
<div style="left:11px;top:653px;width:532px;height:1px;background:#1a1a1a;"></div>
<div style="left:12px;top:655px;width:514px;height:16px;background:#474747;"></div>
<div style="left:15px;top:656px;width:13px;height:14px;background:#3a3a3a;"></div>
<svg style="left:16px;top:658px;" width="12" height="10" viewBox="0 0 12 10"><path d="M0.5 5C2.5 1.5 9.5 1.5 11.5 5C9.5 8.5 2.5 8.5 0.5 5Z" fill="#c0c0c0"/><circle cx="6" cy="5" r="2" fill="#3a3a3a"/></svg>
<div style="left:45px;top:656px;width:13px;height:14px;background:#3b3b3b;"></div>
<div style="left:60px;top:656px;width:13px;height:14px;background:#3b3b3b;"></div>
<svg style="left:85px;top:662px;" width="8" height="5" viewBox="0 0 8 5"><path d="M0.5 0.5L4 4L7.5 0.5" stroke="#bdbdbd" stroke-width="1" fill="none"/></svg>
<div style="left:96px;top:657px;width:12px;height:12px;background:#adadd4;"></div>
<span style="left:117.50px;top:657.99px;font-size:11px;line-height:11px;color:#c8c8c8;">1</span>
<svg style="left:148px;top:657px;" width="11" height="14" viewBox="0 0 11 14"><path d="M1 0.5H7L10.5 4V13.5H1Z" fill="#f0f0f0"/><path d="M7 0.5V4H10.5" fill="#cfcfcf"/><rect x="2.5" y="6" width="6" height="6" fill="#2f8fe8"/><path d="M2.5 12L5 8.5L8.5 12Z" fill="#b0d8ff"/></svg>
<div style="left:162px;top:655px;width:110px;height:16px;background:#3c3c3c;border:2px solid #a9a9a9;border-radius:1px"></div>
<span style="left:166.00px;top:657.84px;font-size:12px;line-height:12px;color:#d8d8d8;">favicon-p.png</span>
<div style="left:277px;top:656px;width:14px;height:14px;background:#3a3a3a;"></div>
<svg style="left:278px;top:658px;" width="13" height="11" viewBox="0 0 13 11"><path d="M2 6A4.5 4.5 0 0 1 11 6Z" fill="#c0c0c0"/><path d="M6.5 1.5V11M4 3.5V6M9 3.5V6" stroke="#3a3a3a" stroke-width="0.9"/><rect x="0.5" y="6.5" width="12" height="1.3" fill="#c0c0c0"/><rect x="3" y="9" width="7" height="1.3" fill="#c0c0c0"/></svg>
<div style="left:308px;top:656px;width:13px;height:14px;background:#3a3a3a;"></div>
<svg style="left:309px;top:657px;" width="12" height="12" viewBox="0 0 12 12"><path d="M1.5 11L10.5 1.5" stroke="#c8c8c8" stroke-width="1.2"/></svg>
<div style="left:353px;top:656px;width:13px;height:14px;background:#3d3d3d;"></div>
<div style="left:368px;top:656px;width:13px;height:14px;background:#3d3d3d;"></div>
<div style="left:383px;top:656px;width:13px;height:14px;background:#3d3d3d;"></div>
<svg style="left:415px;top:657px;" width="13" height="13" viewBox="0 0 13 13"><path d="M6.50 5.70 L6.38 5.62 L6.24 5.57 L6.08 5.53 L5.91 5.53 L5.73 5.55 L5.55 5.61 L5.37 5.69 L5.19 5.82 L5.03 5.97 L4.89 6.16 L4.78 6.37 L4.69 6.61 L4.64 6.88 L4.63 7.15 L4.66 7.44 L4.73 7.73 L4.85 8.01 L5.02 8.29 L5.23 8.54 L5.49 8.77 L5.78 8.97 L6.11 9.13 L6.47 9.24 L6.85 9.30 L7.25 9.31 L7.66 9.26 L8.07 9.15 L8.46 8.98 L8.84 8.75 L9.20 8.46 L9.51 8.11 L9.78 7.72 L10.00 7.28 L10.16 6.81 L10.25 6.30 L10.27 5.78 L10.22 5.25 L10.09 4.72 L9.88 4.20 L9.60 3.71 L9.25 3.25 L8.83 2.83 L8.34 2.47 L7.80 2.18 L7.22 1.96 L6.60 1.82 L5.95 1.76 L5.29 1.80 L4.64 1.93 L3.99 2.15 L3.37 2.47 L2.79 2.87 L2.27 3.36 L1.80 3.92 L1.42 4.55 L1.12 5.24 L0.91 5.97 L0.81 6.74 L0.81 7.52 L0.92 8.31" fill="none" stroke="#bdbdbd" stroke-width="1.1"/></svg>
<div style="left:434px;top:656px;width:89px;height:15px;background:#1b1b1b;"></div>
<span style="left:442.00px;top:658.69px;font-size:11px;line-height:11px;color:#d0d0d0;transform:scaleX(0.9697);transform-origin:0 0;">None</span>
<svg style="left:511px;top:660px;" width="9" height="6" viewBox="0 0 9 6"><path d="M0.5 0.5L4.5 4.5L8.5 0.5" stroke="#bdbdbd" stroke-width="1.1" fill="none"/></svg>
<div style="left:12px;top:671px;width:514px;height:17px;background:#262626;"></div>
<svg style="left:18px;top:675px;" width="7" height="9" viewBox="0 0 7 9"><path d="M6.5 0.5V8.5L0.5 4.5Z" fill="#555"/></svg>
<div style="left:30px;top:673px;width:14px;height:14px;background:#232323;border:1px solid #2e2e2e"></div>
<svg style="left:31.5px;top:675px;" width="10" height="10" viewBox="0 0 10 10"><path d="M5 0.3L9.7 5L5 9.7L0.3 5Z" fill="#2f8fe8"/></svg>
<svg style="left:48px;top:675px;" width="7" height="9" viewBox="0 0 7 9"><path d="M0.5 0.5V8.5L6.5 4.5Z" fill="#c0c0c0"/></svg>
<div style="left:120.5px;top:680px;width:1px;height:1px;background:#444;"></div>
<div style="left:130px;top:673px;width:15px;height:15px;background:#232323;border:1px solid #2e2e2e"></div>
<svg style="left:131px;top:673px;" width="14" height="15" viewBox="0 0 14 15"><circle cx="7" cy="9" r="5" fill="none" stroke="#2f8fe8" stroke-width="1.3"/><path d="M5 1.5H9M7 1.5V4M7 9L9.5 6.5M2.5 3.5L3.8 4.8" stroke="#2f8fe8" stroke-width="1.2"/></svg>
<svg style="left:150px;top:673px;" width="12" height="13" viewBox="0 0 12 13"><path d="M1 0.5V12H11.5" stroke="#c0c0c0" stroke-width="1.1" fill="none"/><path d="M2 6L4 9L6.5 5L8.5 8L10.5 4" stroke="#c0c0c0" stroke-width="1" fill="none"/></svg>
<div style="left:165px;top:672px;width:108px;height:15px;background:#3d3d3d;"></div>
<span style="left:170.00px;top:675.69px;font-size:11px;line-height:11px;color:#c8c8c8;transform:scaleX(0.9449);transform-origin:0 0;">Scale</span>
<div style="left:277px;top:673px;width:14px;height:14px;background:#1c1c1c;"></div>
<svg style="left:278px;top:676px;" width="13" height="8" viewBox="0 0 13 8"><path d="M5 1.2H3A2.8 2.8 0 0 0 3 6.8H5M8 1.2H10A2.8 2.8 0 0 1 10 6.8H8M4 4H9" stroke="#c0c0c0" stroke-width="1.3" fill="none"/></svg>
<span style="left:296.00px;top:675.69px;font-size:11px;line-height:11px;color:#3a91ee;transform:scaleX(0.9809);transform-origin:0 0;">0,0</span>
<span style="left:312.00px;top:675.69px;font-size:11px;line-height:11px;color:#3a91ee;transform:scaleX(0.9811);transform-origin:0 0;">,0,0</span>
<span style="left:330.50px;top:675.69px;font-size:11px;line-height:11px;color:#b0b0b0;transform:scaleX(0.9202);transform-origin:0 0;">%</span>
<svg style="left:428px;top:674px;" width="13" height="13" viewBox="0 0 13 13"><path d="M6.50 5.70 L6.38 5.62 L6.24 5.57 L6.08 5.53 L5.91 5.53 L5.73 5.55 L5.55 5.61 L5.37 5.69 L5.19 5.82 L5.03 5.97 L4.89 6.16 L4.78 6.37 L4.69 6.61 L4.64 6.88 L4.63 7.15 L4.66 7.44 L4.73 7.73 L4.85 8.01 L5.02 8.29 L5.23 8.54 L5.49 8.77 L5.78 8.97 L6.11 9.13 L6.47 9.24 L6.85 9.30 L7.25 9.31 L7.66 9.26 L8.07 9.15 L8.46 8.98 L8.84 8.75 L9.20 8.46 L9.51 8.11 L9.78 7.72 L10.00 7.28 L10.16 6.81 L10.25 6.30 L10.27 5.78 L10.22 5.25 L10.09 4.72 L9.88 4.20 L9.60 3.71 L9.25 3.25 L8.83 2.83 L8.34 2.47 L7.80 2.18 L7.22 1.96 L6.60 1.82 L5.95 1.76 L5.29 1.80 L4.64 1.93 L3.99 2.15 L3.37 2.47 L2.79 2.87 L2.27 3.36 L1.80 3.92 L1.42 4.55 L1.12 5.24 L0.91 5.97 L0.81 6.74 L0.81 7.52 L0.92 8.31" fill="none" stroke="#bdbdbd" stroke-width="1.1"/></svg>
<div style="left:11px;top:688px;width:532px;height:1px;background:#1f1f1f;"></div>
<div style="left:543px;top:598px;width:1127px;height:7px;background:#232323;"></div>
<div style="left:544px;top:605px;width:1126px;height:10px;background:#0f0f0f;"></div>
<div style="left:550px;top:606px;width:1113px;height:8px;background:#6b6b6b;"></div>
<svg style="left:544px;top:605px;" width="7" height="10" viewBox="0 0 7 10"><path d="M7 0H5A5 5 0 0 0 5 10H7Z" fill="#2f8ff0"/></svg>
<div style="left:550px;top:606px;width:2px;height:8px;background:#4a7fb8;"></div>
<svg style="left:1663px;top:605px;" width="7" height="10" viewBox="0 0 7 10"><path d="M0 0H2A5 5 0 0 1 2 10H0Z" fill="#2f8ff0"/></svg>
<div style="left:543px;top:615px;width:1127px;height:19px;background:#232323;"></div>
<div style="left:551px;top:629px;width:1px;height:5px;background:#8a8a8a;"></div>
<div style="left:543px;top:614px;width:30px;height:16px;overflow:hidden"><span style="position:absolute;left:-4px;top:3.2px;font-size:11px;line-height:11px;color:#b8b8b8">0:00f</span></div>
<div style="left:613px;top:629px;width:1px;height:5px;background:#8a8a8a;"></div>
<span style="left:604.83px;top:616.37px;font-size:11.5px;line-height:11.5px;color:#b4b4b4;transform:scaleX(0.9200);transform-origin:0 0;">10f</span>
<div style="left:676px;top:629px;width:1px;height:5px;background:#8a8a8a;"></div>
<span style="left:667.31px;top:616.37px;font-size:11.5px;line-height:11.5px;color:#b4b4b4;transform:scaleX(0.9200);transform-origin:0 0;">20f</span>
<div style="left:738px;top:626px;width:1px;height:8px;background:#8a8a8a;"></div>
<span style="left:722.43px;top:616.37px;font-size:11.5px;line-height:11.5px;color:#b4b4b4;transform:scaleX(0.9200);transform-origin:0 0;">01:00f</span>
<div style="left:801px;top:629px;width:1px;height:5px;background:#8a8a8a;"></div>
<span style="left:792.27px;top:616.37px;font-size:11.5px;line-height:11.5px;color:#b4b4b4;transform:scaleX(0.9200);transform-origin:0 0;">10f</span>
<div style="left:863px;top:629px;width:1px;height:5px;background:#8a8a8a;"></div>
<span style="left:854.75px;top:616.37px;font-size:11.5px;line-height:11.5px;color:#b4b4b4;transform:scaleX(0.9200);transform-origin:0 0;">20f</span>
<div style="left:926px;top:626px;width:1px;height:8px;background:#8a8a8a;"></div>
<span style="left:909.87px;top:616.37px;font-size:11.5px;line-height:11.5px;color:#b4b4b4;transform:scaleX(0.9200);transform-origin:0 0;">02:00f</span>
<div style="left:988px;top:629px;width:1px;height:5px;background:#8a8a8a;"></div>
<span style="left:979.71px;top:616.37px;font-size:11.5px;line-height:11.5px;color:#b4b4b4;transform:scaleX(0.9200);transform-origin:0 0;">10f</span>
<div style="left:1051px;top:629px;width:1px;height:5px;background:#8a8a8a;"></div>
<span style="left:1042.19px;top:616.37px;font-size:11.5px;line-height:11.5px;color:#b4b4b4;transform:scaleX(0.9200);transform-origin:0 0;">20f</span>
<div style="left:1113px;top:626px;width:1px;height:8px;background:#8a8a8a;"></div>
<span style="left:1097.31px;top:616.37px;font-size:11.5px;line-height:11.5px;color:#b4b4b4;transform:scaleX(0.9200);transform-origin:0 0;">03:00f</span>
<div style="left:1176px;top:629px;width:1px;height:5px;background:#8a8a8a;"></div>
<span style="left:1167.15px;top:616.37px;font-size:11.5px;line-height:11.5px;color:#b4b4b4;transform:scaleX(0.9200);transform-origin:0 0;">10f</span>
<div style="left:1238px;top:629px;width:1px;height:5px;background:#8a8a8a;"></div>
<span style="left:1229.63px;top:616.37px;font-size:11.5px;line-height:11.5px;color:#b4b4b4;transform:scaleX(0.9200);transform-origin:0 0;">20f</span>
<div style="left:1300px;top:626px;width:1px;height:8px;background:#8a8a8a;"></div>
<span style="left:1284.75px;top:616.37px;font-size:11.5px;line-height:11.5px;color:#b4b4b4;transform:scaleX(0.9200);transform-origin:0 0;">04:00f</span>
<div style="left:1363px;top:629px;width:1px;height:5px;background:#8a8a8a;"></div>
<span style="left:1354.59px;top:616.37px;font-size:11.5px;line-height:11.5px;color:#b4b4b4;transform:scaleX(0.9200);transform-origin:0 0;">10f</span>
<div style="left:1425px;top:629px;width:1px;height:5px;background:#8a8a8a;"></div>
<span style="left:1417.07px;top:616.37px;font-size:11.5px;line-height:11.5px;color:#b4b4b4;transform:scaleX(0.9200);transform-origin:0 0;">20f</span>
<div style="left:1488px;top:626px;width:1px;height:8px;background:#8a8a8a;"></div>
<span style="left:1472.19px;top:616.37px;font-size:11.5px;line-height:11.5px;color:#b4b4b4;transform:scaleX(0.9200);transform-origin:0 0;">05:00f</span>
<div style="left:1550px;top:629px;width:1px;height:5px;background:#8a8a8a;"></div>
<span style="left:1542.03px;top:616.37px;font-size:11.5px;line-height:11.5px;color:#b4b4b4;transform:scaleX(0.9200);transform-origin:0 0;">10f</span>
<div style="left:1613px;top:629px;width:1px;height:5px;background:#8a8a8a;"></div>
<span style="left:1604.51px;top:616.37px;font-size:11.5px;line-height:11.5px;color:#b4b4b4;transform:scaleX(0.9200);transform-origin:0 0;">20f</span>
<span style="left:1658.53px;top:616.07px;font-size:11.5px;line-height:11.5px;color:#b4b4b4;transform:scaleX(0.9200);transform-origin:0 0;">06</span>
<div style="left:543px;top:634px;width:1127px;height:1px;background:#0f0f0f;"></div>
<div style="left:544px;top:635px;width:1126px;height:16px;background:#0f0f0f;"></div>
<div style="left:551px;top:636px;width:1112px;height:14px;background:#666666;"></div>
<svg style="left:545px;top:636px;" width="6" height="14" viewBox="0 0 6 14"><path d="M6 0H4A4 4 0 0 0 0 4V10A4 4 0 0 0 4 14H6Z" fill="#2f8ff0"/></svg>
<svg style="left:1663px;top:636px;" width="6" height="14" viewBox="0 0 6 14"><path d="M0 0H2A4 4 0 0 1 6 4V10A4 4 0 0 1 2 14H0Z" fill="#2f8ff0"/></svg>
<div style="left:551px;top:650px;width:1112px;height:1px;background:#0f0f0f;"></div>
<div style="left:551px;top:651px;width:1112px;height:3px;background:#1ec21e;"></div>
<div style="left:1663px;top:650px;width:7px;height:4px;background:#232323;"></div>
<div style="left:543px;top:654px;width:1120px;height:307px;background:#343434;"></div>
<div style="left:1663px;top:654px;width:7px;height:307px;background:#2d2d2d;"></div>
<svg style="left:543px;top:654px;" width="1127" height="307" viewBox="0 0 1127 307"><path d="M70.5 0V307" stroke="#222" stroke-width="1"/><path d="M133.5 0V307" stroke="#222" stroke-width="1"/><path d="M195.5 0V307" stroke="#222" stroke-width="1"/><path d="M258.5 0V307" stroke="#222" stroke-width="1"/><path d="M320.5 0V307" stroke="#222" stroke-width="1"/><path d="M383.5 0V307" stroke="#222" stroke-width="1"/><path d="M445.5 0V307" stroke="#222" stroke-width="1"/><path d="M508.5 0V307" stroke="#222" stroke-width="1"/><path d="M570.5 0V307" stroke="#222" stroke-width="1"/><path d="M633.5 0V307" stroke="#222" stroke-width="1"/><path d="M695.5 0V307" stroke="#222" stroke-width="1"/><path d="M757.5 0V307" stroke="#222" stroke-width="1"/><path d="M820.5 0V307" stroke="#222" stroke-width="1"/><path d="M882.5 0V307" stroke="#222" stroke-width="1"/><path d="M945.5 0V307" stroke="#222" stroke-width="1"/><path d="M1007.5 0V307" stroke="#222" stroke-width="1"/><path d="M1070.5 0V307" stroke="#222" stroke-width="1"/><path d="M0 27.5H1127" stroke="#222" stroke-width="1"/><path d="M0 59.5H1127" stroke="#222" stroke-width="1"/><path d="M0 92.5H1127" stroke="#222" stroke-width="1"/><path d="M0 124.5H1127" stroke="#222" stroke-width="1"/><path d="M0 156.5H1127" stroke="#222" stroke-width="1"/><path d="M0 189.5H1127" stroke="#222" stroke-width="1"/><path d="M0 221.5H1127" stroke="#222" stroke-width="1"/><path d="M0 253.5H1127" stroke="#222" stroke-width="1"/></svg>
<div style="left:543px;top:938px;width:1127px;height:2px;background:#1b1b1b;"></div>
<div style="left:1670px;top:654px;width:1px;height:355px;background:#1d1d1d;"></div>
<span style="left:553.50px;top:668.61px;font-size:10.5px;line-height:10.5px;color:#a8a8a8;">400 %/sec</span>
<span style="left:553.50px;top:700.94px;font-size:10.5px;line-height:10.5px;color:#a8a8a8;">350</span>
<span style="left:553.50px;top:733.27px;font-size:10.5px;line-height:10.5px;color:#a8a8a8;">300</span>
<span style="left:553.50px;top:765.60px;font-size:10.5px;line-height:10.5px;color:#a8a8a8;">250</span>
<span style="left:553.50px;top:797.93px;font-size:10.5px;line-height:10.5px;color:#a8a8a8;">200</span>
<span style="left:553.50px;top:830.26px;font-size:10.5px;line-height:10.5px;color:#a8a8a8;">150</span>
<span style="left:553.50px;top:862.59px;font-size:10.5px;line-height:10.5px;color:#a8a8a8;">100</span>
<span style="left:553.50px;top:894.92px;font-size:10.5px;line-height:10.5px;color:#a8a8a8;">50</span>
<span style="left:553.50px;top:927.25px;font-size:10.5px;line-height:10.5px;color:#a8a8a8;">0</span>
<svg style="left:543px;top:937px;" width="1127" height="4" viewBox="0 0 1127 4"><path d="M0 3H4" stroke="#b8864a" stroke-width="2"/><path d="M201 3H1127" stroke="#b58036" stroke-width="2" stroke-dasharray="3 3"/></svg>
<svg style="left:0px;top:0px;pointer-events:none" width="1920" height="1030" viewBox="0 0 1920 1030"><path d="M551.72 938.62 L553.27 934.35 L554.75 930.06 L556.16 925.77 L557.51 921.46 L558.79 917.13 L560.00 912.80 L561.16 908.45 L562.25 904.09 L563.29 899.72 L564.27 895.34 L565.20 890.96 L566.08 886.56 L566.91 882.15 L567.69 877.73 L568.42 873.31 L569.12 868.88 L569.77 864.44 L570.38 859.99 L570.96 855.53 L571.50 851.07 L572.01 846.61 L572.49 842.14 L572.94 837.66 L573.37 833.18 L573.77 828.69 L574.15 824.20 L574.50 819.70 L574.84 815.21 L575.17 810.71 L575.48 806.20 L575.77 801.70 L576.06 797.19 L576.34 792.68 L576.62 788.17 L576.89 783.66 L577.15 779.15 L577.42 774.64 L577.69 770.14 L577.97 765.63 L578.25 761.12 L578.54 756.62 L578.85 752.11 L579.16 747.61 L579.49 743.12 L579.84 738.62 L580.20 734.13 L580.59 729.65 L581.00 725.17 L581.43 720.69 L581.89 716.22 L582.39 711.76 L582.91 707.30 L583.46 702.85 L584.06 698.40 L584.68 693.96 L585.35 689.53 L586.06 685.11 L586.82 680.70 L587.62 676.29 L589.11 681.94 L590.44 687.21 L591.63 692.54 L592.72 697.93 L593.70 703.38 L594.58 708.87 L595.39 714.41 L596.12 719.99 L596.79 725.60 L597.41 731.24 L597.98 736.91 L598.53 742.60 L599.05 748.31 L599.56 754.02 L600.08 759.75 L600.60 765.48 L601.14 771.21 L601.71 776.93 L602.32 782.64 L602.98 788.34 L603.70 794.01 L604.50 799.66 L605.37 805.29 L606.34 810.88 L607.41 816.43 L608.59 821.94 L609.89 827.40 L611.33 832.81 L612.91 838.17 L614.64 843.46 L616.54 848.69 L618.61 853.85 L620.86 858.93 L623.30 863.93 L625.92 868.84 L628.73 873.64 L631.72 878.33 L634.90 882.90 L638.26 887.32 L641.79 891.61 L645.51 895.73 L649.41 899.69 L653.48 903.47 L657.74 907.07 L662.17 910.46 L666.77 913.65 L671.54 916.62 L676.47 919.39 L681.53 921.96 L686.71 924.33 L692.00 926.51 L697.38 928.51 L702.84 930.34 L708.35 931.99 L713.90 933.48 L719.48 934.81 L725.08 936.00 L730.66 937.03 L736.23 937.93" fill="none" stroke="#f0352a" stroke-width="2" stroke-linejoin="round"/></svg>
<svg style="left:543px;top:930px;" width="210" height="20" viewBox="0 0 210 20"><path d="M8.5 10.5H39M102 10.5H192" stroke="#f5dd00" stroke-width="2"/><circle cx="39" cy="10" r="2.8" fill="#f5dd00"/><circle cx="102" cy="10" r="2.8" fill="#f5dd00"/><rect x="6.5" y="7.5" width="6" height="6" fill="none" stroke="#f5dd00" stroke-width="1.2"/><rect x="192" y="6.8" width="7" height="7" fill="#ffe600"/></svg>
<div style="left:551px;top:619px;width:1px;height:342px;background:#2f8ff0;"></div>
<svg style="left:545px;top:618px;" width="13" height="16" viewBox="0 0 13 16"><path d="M0.5 1.5A1 1 0 0 1 1.5 0.5H11.5A1 1 0 0 1 12.5 1.5V6L6.5 15L0.5 6Z" fill="#2f8ff0"/></svg>
<div style="left:551px;top:624px;width:1px;height:6px;background:#9ec8f5;"></div>
<div style="left:717px;top:922px;width:39px;height:37px;background:none;border:3px solid #b7e61c"></div>
<svg style="left:640px;top:950px;" width="50" height="40" viewBox="0 0 50 40"><path d="M6.5 20.7L24.5 6V12.5H42.5V28.5H24.5V35Z" fill="none" stroke="#b7e61c" stroke-width="3" stroke-linejoin="miter"/></svg>
<svg style="left:1673px;top:636px;" width="13" height="16" viewBox="0 0 13 16"><path d="M1 1H12V10L6.5 15L1 10Z" fill="#bdbdbd"/></svg>
<svg style="left:1670px;top:655px;" width="17" height="15" viewBox="0 0 17 15"><path d="M7.5 1.5L1.5 9H8" fill="none" stroke="#bdbdbd" stroke-width="1.1"/><rect x="8" y="3" width="8" height="6.5" fill="#bdbdbd"/><circle cx="7" cy="10" r="2.8" fill="#232323" stroke="#bdbdbd" stroke-width="1.2"/></svg>
<div style="left:1670px;top:654px;width:17px;height:1px;background:#1e1e1e;"></div>
<div style="left:11px;top:992px;width:640px;height:1.5px;background:#0c0c0c;"></div>
<div style="left:15.6px;top:993.75px;width:16.3px;height:14.3px;background:#1e1e1e;border:1px solid #2e2e2e"></div>
<svg style="left:17px;top:995px;" width="14" height="13" viewBox="0 0 14 13"><rect x="1" y="1" width="7" height="7" fill="none" stroke="#3390e8" stroke-width="1.2"/><rect x="3.5" y="3.5" width="7" height="7" fill="#1e1e1e" stroke="#3390e8" stroke-width="1.2"/><rect x="6" y="6" width="7" height="6.5" fill="#1e1e1e" stroke="#3390e8" stroke-width="1.2"/><rect x="8.5" y="8.5" width="2" height="2" fill="#3390e8"/></svg>
<svg style="left:36px;top:995px;" width="13" height="13" viewBox="0 0 13 13"><circle cx="5" cy="5" r="4.2" fill="none" stroke="#b8b8b8" stroke-width="1.2"/><rect x="5" y="5" width="7" height="7" fill="#232323" stroke="#b8b8b8" stroke-width="1.2"/><path d="M5 5H9.2A4.2 4.2 0 0 1 5 9.2Z" fill="#b8b8b8"/></svg>
<svg style="left:55px;top:995px;" width="13" height="13" viewBox="0 0 13 13"><path d="M3 1L3.5 4L1 6.5L3.5 9L3 12H10L9.5 9L12 6.5L9.5 4L10 1Z" fill="#b8b8b8"/><path d="M5.5 2V11M7.5 2V11" stroke="#555" stroke-width="0.8"/></svg>
<svg style="left:74px;top:995px;" width="14" height="13" viewBox="0 0 14 13"><circle cx="5" cy="5.5" r="4.2" fill="#b8b8b8"/><path d="M1 11.5H10" stroke="#b8b8b8" stroke-width="1.5"/><path d="M9 8L11 2L13 8" fill="none" stroke="#b8b8b8" stroke-width="1"/></svg>
<span style="left:116.25px;top:995.79px;font-size:11px;line-height:11px;color:#b4b4b4;transform:scaleX(0.9914);transform-origin:0 0;">Frame Render Time:</span>
<span style="left:221.90px;top:995.79px;font-size:11px;line-height:11px;color:#5ad6a4;">0ms</span>
<div style="left:275.5px;top:993.5px;width:133.5px;height:14.5px;background:#1f1f1f;border:1px solid #343434;border-radius:2px"></div>
<span style="left:281.30px;top:995.79px;font-size:11px;line-height:11px;color:#bcbcbc;transform:scaleX(1.0068);transform-origin:0 0;">Toggle Switches / Modes</span>
<svg style="left:548px;top:996px;" width="12" height="7" viewBox="0 0 12 7"><path d="M0.5 6.5L4 3.5L5.5 4.5L8 1L11.5 6.5Z" fill="#b8b8b8"/></svg>
<div style="left:580px;top:1000px;width:38px;height:1.5px;background:#444;"></div>
<svg style="left:569px;top:996px;" width="12" height="12" viewBox="0 0 12 12"><circle cx="6" cy="6" r="4.6" fill="#232323" stroke="#9a9a9a" stroke-width="1.4"/></svg>
<svg style="left:629px;top:996px;" width="18" height="9" viewBox="0 0 18 9"><path d="M0.5 8.5L5.5 2.5L6.8 3.3L2.5 8.5Z M5 8.5L11 1L17.5 8.5Z" fill="#b8b8b8"/></svg>
<svg style="left:872px;top:973px;" width="19" height="17" viewBox="0 0 19 17"><path d="M0.5 6.5C4 1 13 1 16.5 6.5C13 12 4 12 0.5 6.5Z" fill="#b8b8b8"/><circle cx="8.5" cy="6.5" r="3" fill="#232323"/><circle cx="8.5" cy="6" r="1.3" fill="#b8b8b8"/><path d="M13 14H19L16 17Z" fill="#b8b8b8"/></svg>
<svg style="left:898px;top:972px;" width="19" height="18" viewBox="0 0 19 18"><rect x="1" y="1.5" width="13" height="11" fill="none" stroke="#b8b8b8" stroke-width="1.2"/><path d="M1 3.5H14" stroke="#b8b8b8" stroke-width="1.6"/><path d="M3.5 6.5H4.5M6 6.5H11.5M3.5 8.5H4.5M6 8.5H11.5M3.5 10.5H4.5M6 10.5H11.5" stroke="#b8b8b8" stroke-width="1"/><path d="M13 15H19L16 18Z" fill="#b8b8b8"/></svg>
<svg style="left:923px;top:972px;" width="17" height="16" viewBox="0 0 17 16"><rect x="2.5" y="2.5" width="11" height="11" fill="none" stroke="#b8b8b8" stroke-width="1.1"/><rect x="0.8" y="0.8" width="3.4" height="3.4" fill="#b8b8b8"/><rect x="12" y="0.8" width="3.4" height="3.4" fill="#b8b8b8"/><rect x="0.8" y="12" width="3.4" height="3.4" fill="#b8b8b8"/><rect x="12" y="12" width="3.4" height="3.4" fill="#b8b8b8"/><rect x="6.4" y="0.8" width="3.4" height="3.4" fill="#b8b8b8"/><rect x="6.4" y="12" width="3.4" height="3.4" fill="#b8b8b8"/><rect x="0.8" y="6.4" width="3.4" height="3.4" fill="#b8b8b8"/><rect x="12" y="6.4" width="3.4" height="3.4" fill="#b8b8b8"/><rect x="7.5" y="7.5" width="1" height="1" fill="#b8b8b8"/></svg>
<svg style="left:948px;top:972px;" width="16" height="16" viewBox="0 0 16 16"><path d="M2.5 13V7.5A5.5 5.5 0 0 1 13.5 7.5V13" fill="none" stroke="#b8b8b8" stroke-width="3.4"/><path d="M2.5 11V13.5M13.5 11V13.5" stroke="#666" stroke-width="3.4"/></svg>
<div style="left:994.4px;top:970px;width:24px;height:20.5px;background:#151515;border:1px solid #2b2b2b;border-radius:3px"></div>
<svg style="left:995px;top:972px;" width="22" height="17" viewBox="0 0 22 17"><path d="M5 2V15" stroke="#3390e8" stroke-width="1.3"/><path d="M2.5 4.5L5 1.2L7.5 4.5Z M2.5 12.5L5 15.8L7.5 12.5Z" fill="#3390e8"/><circle cx="12" cy="7" r="4.6" fill="none" stroke="#3390e8" stroke-width="1.4"/><path d="M15.3 10.3L19.5 14.5" stroke="#3390e8" stroke-width="1.8"/></svg>
<svg style="left:1021.5px;top:972px;" width="19" height="16" viewBox="0 0 19 16"><rect x="1.5" y="2.5" width="16" height="12" fill="none" stroke="#b8b8b8" stroke-width="1.1"/><path d="M4 0.5V2.5M7 0.5V2.5M10 0.5V2.5M13 0.5V2.5M16 0.5V2.5M0 5H1.5M0 8H1.5M0 11H1.5" stroke="#b8b8b8" stroke-width="0.9"/><path d="M1.5 6H17.5M1.5 9H17.5M1.5 12H17.5" stroke="#666" stroke-width="0.6"/><path d="M2 5C7 5 8 11.5 16 11.5" fill="none" stroke="#b8b8b8" stroke-width="1.1"/></svg>
<svg style="left:1046.5px;top:972px;" width="19" height="16" viewBox="0 0 19 16"><rect x="1.5" y="2.5" width="16" height="12" fill="none" stroke="#b8b8b8" stroke-width="1.1"/><path d="M4 0.5V2.5M7 0.5V2.5M10 0.5V2.5M13 0.5V2.5M16 0.5V2.5M0 5H1.5M0 8H1.5M0 11H1.5" stroke="#b8b8b8" stroke-width="0.9"/><path d="M1.5 6H17.5M1.5 9H17.5M1.5 12H17.5" stroke="#666" stroke-width="0.6"/><path d="M2 5C8 5 9 9 16 9M2 8C7 8 9 12 16 12" fill="none" stroke="#b8b8b8" stroke-width="1.1"/></svg>
<svg style="left:1096px;top:973px;" width="21" height="14" viewBox="0 0 21 14"><path d="M1 2.5H4M8 2.5H20M1 6.5H4M14 6.5H20M1 10.5H10M14 10.5H20" stroke="#444" stroke-width="0.9"/><path d="M5 0.5L7.5 4.5M7.5 0.5L5 4.5M10 4.5L11.5 7L13 4.5M11.5 7V9M9 8.5H13L9 13H13" fill="none" stroke="#444" stroke-width="0.9"/><path d="M1 13C3 10 5 8 8 7" fill="none" stroke="#444" stroke-width="0.9"/></svg>
<svg style="left:1150px;top:973px;" width="17" height="17" viewBox="0 0 17 17"><path d="M6.5 0.8L12.6 6.8L6.5 12.8L0.4 6.8Z" fill="#b8b8b8"/><path d="M10.5 13.8H16L13.25 16.5Z" fill="#b8b8b8"/></svg>
<svg style="left:1172px;top:973px;" width="19" height="14" viewBox="0 0 19 14"><rect x="1.5" y="9" width="4.5" height="4.5" fill="#b8b8b8"/><rect x="10.5" y="0.5" width="4.5" height="4.5" fill="#b8b8b8"/><path d="M0 2.8H2V11M6 11.5H11.5V3M15 2.8H18.5" fill="none" stroke="#b8b8b8" stroke-width="1"/></svg>
<svg style="left:1196px;top:973px;" width="19" height="14" viewBox="0 0 19 14"><rect x="4.5" y="9" width="4.5" height="4.5" fill="#b8b8b8"/><rect x="12.5" y="0.5" width="4.5" height="4.5" fill="#b8b8b8"/><path d="M0 11.3H4.5M8 10L13.5 4M17 2.8H19" fill="none" stroke="#b8b8b8" stroke-width="1"/></svg>
<svg style="left:1222px;top:973px;" width="18" height="14" viewBox="0 0 18 14"><rect x="1.5" y="0.8" width="4.5" height="4.5" fill="#b8b8b8"/><path d="M0.5 13.5C1 10 2.5 6 3.8 5M6 2.5C9 1.5 12 1 16 1" fill="none" stroke="#b8b8b8" stroke-width="0.9"/></svg>
<svg style="left:1270px;top:973px;" width="21" height="14" viewBox="0 0 21 14"><rect x="8" y="0.5" width="4.5" height="4.5" fill="#b8b8b8"/><rect x="0.8" y="1.3" width="3" height="3" fill="#b8b8b8"/><rect x="16.8" y="1.3" width="3" height="3" fill="#b8b8b8"/><path d="M3 2.8H17.5M0.5 13.5H2.5C5 13.5 6 3 8.5 3M12 3C14.5 3 15.5 13.5 18 13.5H20" fill="none" stroke="#b8b8b8" stroke-width="0.9"/></svg>
<svg style="left:1296.5px;top:973px;" width="19" height="14" viewBox="0 0 19 14"><rect x="14" y="0.5" width="4.5" height="4.5" fill="#b8b8b8"/><rect x="3" y="1.3" width="3" height="3" fill="#b8b8b8"/><path d="M5 2.8H14.5M0 13.5H3C7 13.5 9 3 14 3" fill="none" stroke="#b8b8b8" stroke-width="0.9"/></svg>
<svg style="left:1321.5px;top:973px;" width="19" height="14" viewBox="0 0 19 14"><rect x="0.5" y="0.5" width="4.5" height="4.5" fill="#b8b8b8"/><rect x="13" y="1.3" width="3" height="3" fill="#b8b8b8"/><path d="M4 2.8H14M5 3C10 3 12 13.5 16 13.5H19" fill="none" stroke="#b8b8b8" stroke-width="0.9"/></svg>
<div style="left:1692px;top:79px;width:219px;height:104px;background:#232323;"></div>
<span style="left:1705.50px;top:88.39px;font-size:11px;line-height:11px;color:#d0d0d0;transform:scaleX(1.0249);transform-origin:0 0;">Preview</span>
<svg style="left:1756px;top:90px;" width="9" height="8" viewBox="0 0 9 8"><path d="M0 0.5H9M0 3.5H9M0 6.5H9" stroke="#c8c8c8" stroke-width="1.1"/></svg>
<svg style="left:1738px;top:116px;" width="14" height="10" viewBox="0 0 14 10"><rect x="0.5" y="0" width="1.6" height="10" fill="#b8b8b8"/><path d="M13 0V10L3 5Z" fill="#b8b8b8"/></svg>
<svg style="left:1761px;top:116px;" width="14" height="10" viewBox="0 0 14 10"><path d="M9.5 0V10L0.5 5Z" fill="#b8b8b8"/><rect x="11" y="0" width="1.6" height="10" fill="#b8b8b8"/></svg>
<svg style="left:1787px;top:116px;" width="11" height="10" viewBox="0 0 11 10"><path d="M0.8 0V10L9.8 5Z" fill="#b8b8b8"/></svg>
<svg style="left:1810px;top:116px;" width="14" height="10" viewBox="0 0 14 10"><rect x="0.8" y="0" width="1.6" height="10" fill="#b8b8b8"/><path d="M3.8 0V10L13 5Z" fill="#b8b8b8"/></svg>
<svg style="left:1834px;top:116px;" width="14" height="10" viewBox="0 0 14 10"><path d="M0.8 0V10L10 5Z" fill="#b8b8b8"/><rect x="11.2" y="0" width="1.6" height="10" fill="#b8b8b8"/></svg>
<div style="left:1698px;top:135px;width:195px;height:2px;background:#2e2e2e;"></div>
<span style="left:1699.10px;top:143.99px;font-size:11px;line-height:11px;color:#a8a8a8;">Shortcut</span>
<div style="left:1698.6px;top:159px;width:168px;height:19.3px;background:#1b1b1b;border:1px solid #2e2e2e;border-radius:3px"></div>
<span style="left:1705.75px;top:163.99px;font-size:11px;line-height:11px;color:#d0d0d0;transform:scaleX(0.9620);transform-origin:0 0;">Spacebar</span>
<svg style="left:1853px;top:167px;" width="9" height="6" viewBox="0 0 9 6"><path d="M0.5 0.5L4.5 4.5L8.5 0.5" stroke="#bdbdbd" stroke-width="1.1" fill="none"/></svg>
<svg style="left:1874px;top:162px;" width="15" height="15" viewBox="0 0 15 15"><path d="M4.5 5A5 5 0 1 1 4.2 10.5" fill="none" stroke="#b8b8b8" stroke-width="1.4"/><path d="M1 4.5L6 2V7.5Z" fill="#b8b8b8"/><path d="M1.5 13.5H13" stroke="#b8b8b8" stroke-width="1.3"/></svg>
<div style="left:1692px;top:187px;width:219px;height:823px;background:#232323;border-radius:0 0 8px 0"></div>
<div style="left:1898px;top:187px;width:13px;height:823px;background:#262626;border-radius:0 0 8px 0"></div>
<div style="left:1899px;top:188px;width:10px;height:506px;background:#2f2f2f;border-radius:5px"></div>
<span style="left:1705.10px;top:196.69px;font-size:11px;line-height:11px;color:#d0d0d0;">Properties: favicon-p.png</span>
<svg style="left:1879px;top:198px;" width="9" height="8" viewBox="0 0 9 8"><path d="M0 0.5H9M0 3.5H9M0 6.5H9" stroke="#c8c8c8" stroke-width="1.1"/></svg>
<span style="left:1704.50px;top:219.79px;font-size:11px;line-height:11px;color:#b8b8b8;transform:scaleX(1.0551);transform-origin:0 0;">Layer Transform</span>
<span style="left:1798.00px;top:219.79px;font-size:11px;line-height:11px;color:#3a91ee;transform:scaleX(0.9500);transform-origin:0 0;">Reset</span>
<svg style="left:1715.5px;top:237.3px;" width="12" height="13" viewBox="0 0 12 13"><circle cx="6" cy="7.5" r="4.8" fill="none" stroke="#bdbdbd" stroke-width="1.2"/><path d="M4 1H8M6 1V2.7M9.8 3.2L10.8 2.2" stroke="#bdbdbd" stroke-width="1.1"/></svg>
<span style="left:1752.10px;top:239.99px;font-size:11px;line-height:11px;color:#b8b8b8;transform:scaleX(0.9028);transform-origin:0 0;">Anchor ...</span>
<svg style="left:1715.5px;top:257.2px;" width="12" height="13" viewBox="0 0 12 13"><circle cx="6" cy="7.5" r="4.8" fill="none" stroke="#bdbdbd" stroke-width="1.2"/><path d="M4 1H8M6 1V2.7M9.8 3.2L10.8 2.2" stroke="#bdbdbd" stroke-width="1.1"/></svg>
<span style="left:1752.10px;top:259.89px;font-size:11px;line-height:11px;color:#b8b8b8;transform:scaleX(1.0247);transform-origin:0 0;">Position</span>
<span style="left:1752.10px;top:279.99px;font-size:11px;line-height:11px;color:#b8b8b8;transform:scaleX(0.9449);transform-origin:0 0;">Scale</span>
<svg style="left:1715.5px;top:297.2px;" width="12" height="13" viewBox="0 0 12 13"><circle cx="6" cy="7.5" r="4.8" fill="none" stroke="#bdbdbd" stroke-width="1.2"/><path d="M4 1H8M6 1V2.7M9.8 3.2L10.8 2.2" stroke="#bdbdbd" stroke-width="1.1"/></svg>
<span style="left:1752.10px;top:299.89px;font-size:11px;line-height:11px;color:#b8b8b8;transform:scaleX(1.0275);transform-origin:0 0;">Rotation</span>
<svg style="left:1715.5px;top:317.4px;" width="12" height="13" viewBox="0 0 12 13"><circle cx="6" cy="7.5" r="4.8" fill="none" stroke="#bdbdbd" stroke-width="1.2"/><path d="M4 1H8M6 1V2.7M9.8 3.2L10.8 2.2" stroke="#bdbdbd" stroke-width="1.1"/></svg>
<span style="left:1752.10px;top:320.09px;font-size:11px;line-height:11px;color:#b8b8b8;">Opacity</span>
<svg style="left:1705px;top:280px;" width="7" height="9" viewBox="0 0 7 9"><path d="M6.5 0.5V8.5L0.5 4.5Z" fill="#555"/></svg>
<svg style="left:1716px;top:279px;" width="11" height="11" viewBox="0 0 11 11"><path d="M5.5 0.5L10.5 5.5L5.5 10.5L0.5 5.5Z" fill="#2f8fe8"/></svg>
<svg style="left:1732px;top:280px;" width="7" height="9" viewBox="0 0 7 9"><path d="M0.5 0.5V8.5L6.5 4.5Z" fill="#c0c0c0"/></svg>
<span style="left:1797.00px;top:239.99px;font-size:11px;line-height:11px;color:#3a91ee;transform:scaleX(0.9807);transform-origin:0 0;">260</span>
<span style="left:1831.00px;top:239.99px;font-size:11px;line-height:11px;color:#3a91ee;transform:scaleX(0.9644);transform-origin:0 0;">260</span>
<span style="left:1797.00px;top:259.89px;font-size:11px;line-height:11px;color:#3a91ee;transform:scaleX(0.9807);transform-origin:0 0;">350</span>
<span style="left:1831.00px;top:259.89px;font-size:11px;line-height:11px;color:#3a91ee;transform:scaleX(0.9644);transform-origin:0 0;">350</span>
<div style="left:1795px;top:253.5px;width:23px;height:1px;background:#3a3a3a;"></div>
<div style="left:1830px;top:253.5px;width:23px;height:1px;background:#3a3a3a;"></div>
<div style="left:1795px;top:273.5px;width:23px;height:1px;background:#3a3a3a;"></div>
<div style="left:1830px;top:273.5px;width:23px;height:1px;background:#3a3a3a;"></div>
<div style="left:1795px;top:293.5px;width:23px;height:1px;background:#3a3a3a;"></div>
<div style="left:1830px;top:293.5px;width:23px;height:1px;background:#3a3a3a;"></div>
<svg style="left:1793px;top:281px;" width="14" height="9" viewBox="0 0 14 9"><path d="M5.5 1.5H3.5A2.9 2.9 0 0 0 3.5 7.3H5.5M7.5 1.5H9.5A2.9 2.9 0 0 1 9.5 7.3H7.5M4.5 4.4H8.5" stroke="#3a91ee" stroke-width="1.4" fill="none"/></svg>
<span style="left:1806.00px;top:279.99px;font-size:11px;line-height:11px;color:#b0b0b0;transform:scaleX(0.8691);transform-origin:0 0;">%</span>
<span style="left:1831.00px;top:279.99px;font-size:11px;line-height:11px;color:#3a91ee;transform:scaleX(0.9807);transform-origin:0 0;">0</span>
<span style="left:1840.00px;top:279.99px;font-size:11px;line-height:11px;color:#b0b0b0;transform:scaleX(0.8691);transform-origin:0 0;">%</span>
<span style="left:1797.00px;top:299.89px;font-size:11px;line-height:11px;color:#3a91ee;transform:scaleX(0.9807);transform-origin:0 0;">0</span>
<span style="left:1805.00px;top:299.89px;font-size:11px;line-height:11px;color:#3a91ee;transform:scaleX(0.9423);transform-origin:0 0;">x+0</span>
<span style="left:1824.00px;top:298.88px;font-size:9px;line-height:9px;color:#b0b0b0;">°</span>
<div style="left:1795px;top:313.5px;width:38px;height:1px;background:#3a3a3a;"></div>
<span style="left:1797.00px;top:320.09px;font-size:11px;line-height:11px;color:#3a91ee;transform:scaleX(0.9535);transform-origin:0 0;">100</span>
<div style="left:1816px;top:318px;width:4px;height:13px;overflow:hidden"><span style="position:absolute;left:0;top:0;font-size:11px;line-height:13px;color:#3a91ee">9</span></div>
<div style="left:1795px;top:333.5px;width:23px;height:1px;background:#3a3a3a;"></div>
<div style="left:1692px;top:350px;width:206px;height:1px;background:#191919;"></div>
<span style="left:1704.80px;top:361.19px;font-size:11px;line-height:11px;color:#d0d0d0;transform:scaleX(1.0384);transform-origin:0 0;">Align</span>
<svg style="left:1879px;top:362px;" width="9" height="8" viewBox="0 0 9 8"><path d="M0 0.5H9M0 3.5H9M0 6.5H9" stroke="#c8c8c8" stroke-width="1.1"/></svg>
<span style="left:1699.00px;top:387.19px;font-size:11px;line-height:11px;color:#a8a8a8;transform:scaleX(1.0103);transform-origin:0 0;">Align Layers to:</span>
<div style="left:1785.6px;top:383.6px;width:110px;height:17px;background:#1b1b1b;border:1px solid #2e2e2e;border-radius:3px"></div>
<span style="left:1793.30px;top:387.19px;font-size:11px;line-height:11px;color:#d0d0d0;transform:scaleX(1.0173);transform-origin:0 0;">Composition</span>
<svg style="left:1885px;top:389px;" width="9" height="6" viewBox="0 0 9 6"><path d="M0.5 0.5L4.5 4.5L8.5 0.5" stroke="#bdbdbd" stroke-width="1.1" fill="none"/></svg>
<svg style="left:1703px;top:407px;" width="17" height="19" viewBox="0 0 17 19"><rect x="1" y="0" width="1.2" height="18" fill="#bdbdbd"/><rect x="2.2" y="2.5" width="7.5" height="5" fill="#bdbdbd"/><rect x="2.2" y="10" width="13" height="5" fill="#bdbdbd"/></svg>
<svg style="left:1738px;top:407px;" width="16" height="19" viewBox="0 0 16 19"><rect x="7" y="0" width="1.2" height="18" fill="#bdbdbd"/><rect x="3.7" y="2.5" width="7.8" height="5" fill="#bdbdbd"/><rect x="1" y="10" width="13.2" height="5" fill="#bdbdbd"/></svg>
<svg style="left:1772px;top:407px;" width="17" height="19" viewBox="0 0 17 19"><rect x="14.8" y="0" width="1.2" height="18" fill="#bdbdbd"/><rect x="7.3" y="2.5" width="7.5" height="5" fill="#bdbdbd"/><rect x="1.8" y="10" width="13" height="5" fill="#bdbdbd"/></svg>
<svg style="left:1805px;top:407px;" width="19" height="19" viewBox="0 0 19 19"><rect x="0" y="1" width="18" height="1.2" fill="#bdbdbd"/><rect x="3" y="2.2" width="5" height="14.5" fill="#bdbdbd"/><rect x="10.5" y="2.2" width="5" height="7.5" fill="#bdbdbd"/></svg>
<svg style="left:1839px;top:407px;" width="19" height="19" viewBox="0 0 19 19"><rect x="0" y="8" width="18" height="1.2" fill="#bdbdbd"/><rect x="3" y="1.5" width="5" height="14" fill="#bdbdbd"/><rect x="10.5" y="4.5" width="5" height="8" fill="#bdbdbd"/></svg>
<svg style="left:1873px;top:407px;" width="19" height="19" viewBox="0 0 19 19"><rect x="0" y="16.5" width="18" height="1.2" fill="#bdbdbd"/><rect x="3" y="2" width="5" height="14.5" fill="#bdbdbd"/><rect x="10.5" y="9" width="5" height="7.5" fill="#bdbdbd"/></svg>
<div style="left:1698px;top:429px;width:195px;height:2px;background:#2e2e2e;"></div>
<span style="left:1699.00px;top:435.09px;font-size:11px;line-height:11px;color:#a8a8a8;transform:scaleX(1.0235);transform-origin:0 0;">Distribute Layers:</span>
<svg style="left:1703px;top:450px;" width="19" height="19" viewBox="0 0 19 19"><rect x="0" y="0.8" width="18" height="1" fill="#464646"/><rect x="0" y="9.5" width="18" height="1" fill="#464646"/><rect x="0" y="16" width="18" height="1" fill="#464646"/><rect x="5" y="3" width="8" height="4" fill="#464646"/><rect x="3" y="11.5" width="12" height="5" fill="#464646"/></svg>
<svg style="left:1737px;top:450px;" width="19" height="19" viewBox="0 0 19 19"><rect x="0" y="0.8" width="18" height="1" fill="#464646"/><rect x="0" y="9.5" width="18" height="1" fill="#464646"/><rect x="0" y="16" width="18" height="1" fill="#464646"/><rect x="5" y="3" width="8" height="4" fill="#464646"/><rect x="3" y="11.5" width="12" height="5" fill="#464646"/></svg>
<svg style="left:1771px;top:450px;" width="19" height="19" viewBox="0 0 19 19"><rect x="0" y="0.8" width="18" height="1" fill="#464646"/><rect x="0" y="9.5" width="18" height="1" fill="#464646"/><rect x="0" y="16" width="18" height="1" fill="#464646"/><rect x="5" y="3" width="8" height="4" fill="#464646"/><rect x="3" y="11.5" width="12" height="5" fill="#464646"/></svg>
<svg style="left:1806px;top:450px;" width="19" height="19" viewBox="0 0 19 19"><rect x="0.8" y="0" width="1" height="18" fill="#464646"/><rect x="10" y="0" width="1" height="18" fill="#464646"/><rect x="3" y="3" width="5" height="12" fill="#464646"/><rect x="12" y="5" width="4" height="8" fill="#464646"/></svg>
<svg style="left:1840px;top:450px;" width="19" height="19" viewBox="0 0 19 19"><rect x="0.8" y="0" width="1" height="18" fill="#464646"/><rect x="10" y="0" width="1" height="18" fill="#464646"/><rect x="3" y="3" width="5" height="12" fill="#464646"/><rect x="12" y="5" width="4" height="8" fill="#464646"/></svg>
<svg style="left:1873px;top:450px;" width="19" height="19" viewBox="0 0 19 19"><rect x="0.8" y="0" width="1" height="18" fill="#464646"/><rect x="10" y="0" width="1" height="18" fill="#464646"/><rect x="3" y="3" width="5" height="12" fill="#464646"/><rect x="12" y="5" width="4" height="8" fill="#464646"/></svg>
<div style="left:1692px;top:479px;width:206px;height:1px;background:#191919;"></div>
<span style="left:1705.00px;top:490.19px;font-size:11px;line-height:11px;color:#a8a8a8;">Audio</span>
<div style="left:1692px;top:508px;width:206px;height:2px;background:#191919;"></div>
<span style="left:1705.00px;top:520.39px;font-size:11px;line-height:11px;color:#d0d0d0;transform:scaleX(0.9826);transform-origin:0 0;">Effects &amp; Presets</span>
<svg style="left:1879px;top:522px;" width="9" height="8" viewBox="0 0 9 8"><path d="M0 0.5H9M0 3.5H9M0 6.5H9" stroke="#c8c8c8" stroke-width="1.1"/></svg>
<div style="left:1697.4px;top:541.5px;width:195.2px;height:18.8px;background:#141414;border:1px solid #2a2a2a;border-radius:3px"></div>
<svg style="left:1703px;top:545px;" width="19" height="13" viewBox="0 0 19 13"><circle cx="8" cy="5" r="3.6" fill="none" stroke="#3a91ee" stroke-width="1.3"/><path d="M5.3 7.8L1.5 11.8" stroke="#3a91ee" stroke-width="1.4"/><path d="M11.5 8H17L14.25 11Z" fill="#3a91ee"/></svg>
<span style="left:1726.30px;top:545.89px;font-size:11px;line-height:11px;color:#d0d0d0;transform:scaleX(1.0375);transform-origin:0 0;">light sweep</span>
<svg style="left:1880px;top:546px;" width="10" height="10" viewBox="0 0 10 10"><path d="M1 1L9 9M9 1L1 9" stroke="#d0d0d0" stroke-width="1.5"/></svg>
<div style="left:1692px;top:561px;width:206px;height:36px;background:#212121;"></div>
<svg style="left:1698px;top:570px;" width="8" height="5" viewBox="0 0 8 5"><path d="M0.5 0.5L4 4L7.5 0.5" stroke="#bdbdbd" stroke-width="1" fill="none"/></svg>
<span style="left:1709.30px;top:567.19px;font-size:11px;line-height:11px;color:#b8b8b8;transform:scaleX(0.9877);transform-origin:0 0;">Generate</span>
<div style="left:1692px;top:581px;width:206px;height:16px;background:#2e2e2e;"></div>
<svg style="left:1727px;top:584px;" width="12" height="12" viewBox="0 0 12 12"><path d="M0.5 2.5A1 1 0 0 1 1.5 1.5H4.5V0.5H7.5V1.5H10.5A1 1 0 0 1 11.5 2.5V11.5H0.5Z" fill="#bdbdbd"/><text x="6" y="10.5" font-size="7" font-family="Liberation Sans" text-anchor="middle" fill="#333" font-weight="bold">32</text></svg>
<div style="left:1743px;top:582px;width:89px;height:14px;background:#a9a9a9;"></div>
<span style="left:1746.50px;top:584.19px;font-size:11px;line-height:11px;color:#1e1e1e;transform:scaleX(0.9750);transform-origin:0 0;">CC Light Sweep</span>
<div style="left:1692px;top:597px;width:206px;height:1.5px;background:#0a0a0a;"></div>
<div style="left:1896px;top:598px;width:1.5px;height:17px;background:#0a0a0a;"></div>
<svg style="left:1878px;top:601px;" width="13" height="13" viewBox="0 0 13 13"><path d="M1.5 0.5H12.5V12.5H4.5V9.5H1.5Z" fill="#c0c0c0"/><path d="M0.5 9.5H4L4 12.8Z" fill="#c0c0c0"/></svg>
<div style="left:1692px;top:618px;width:206px;height:1px;background:#191919;"></div>
<span style="left:1705.40px;top:629.19px;font-size:11px;line-height:11px;color:#d0d0d0;transform:scaleX(0.9850);transform-origin:0 0;">Paragraph</span>
<svg style="left:1879px;top:631px;" width="9" height="8" viewBox="0 0 9 8"><path d="M0 0.5H9M0 3.5H9M0 6.5H9" stroke="#c8c8c8" stroke-width="1.1"/></svg>
<div style="left:1699px;top:652.4px;width:20.3px;height:21.6px;background:#151515;border:1px solid #2b2b2b;border-radius:3px"></div>
<svg style="left:1702px;top:656px;" width="17" height="15" viewBox="0 0 17 15"><rect x="0" y="0" width="15" height="1.3" fill="#3390e8"/><rect x="0" y="3" width="12" height="1.3" fill="#3390e8"/><rect x="0" y="6" width="15" height="1.3" fill="#3390e8"/><rect x="0" y="9" width="12" height="1.3" fill="#3390e8"/><rect x="0" y="12" width="15" height="1.3" fill="#3390e8"/></svg>
<svg style="left:1726px;top:656px;" width="17" height="15" viewBox="0 0 17 15"><rect x="0" y="0" width="16" height="1.3" fill="#bdbdbd"/><rect x="2" y="3" width="12" height="1.3" fill="#bdbdbd"/><rect x="0" y="6" width="16" height="1.3" fill="#bdbdbd"/><rect x="2" y="9" width="12" height="1.3" fill="#bdbdbd"/><rect x="0" y="12" width="16" height="1.3" fill="#bdbdbd"/></svg>
<svg style="left:1751px;top:656px;" width="17" height="15" viewBox="0 0 17 15"><rect x="0" y="0" width="16" height="1.3" fill="#bdbdbd"/><rect x="3" y="3" width="13" height="1.3" fill="#bdbdbd"/><rect x="0" y="6" width="16" height="1.3" fill="#bdbdbd"/><rect x="3" y="9" width="13" height="1.3" fill="#bdbdbd"/><rect x="0" y="12" width="16" height="1.3" fill="#bdbdbd"/></svg>
<svg style="left:1782px;top:656px;" width="17" height="15" viewBox="0 0 17 15"><rect x="0" y="0" width="15" height="1.3" fill="#bdbdbd"/><rect x="0" y="3" width="15" height="1.3" fill="#bdbdbd"/><rect x="0" y="6" width="15" height="1.3" fill="#bdbdbd"/><rect x="0" y="9" width="15" height="1.3" fill="#bdbdbd"/><rect x="0" y="12" width="12" height="1.3" fill="#bdbdbd"/></svg>
<svg style="left:1806px;top:656px;" width="17" height="15" viewBox="0 0 17 15"><rect x="0" y="0" width="16" height="1.3" fill="#bdbdbd"/><rect x="0" y="3" width="16" height="1.3" fill="#bdbdbd"/><rect x="0" y="6" width="16" height="1.3" fill="#bdbdbd"/><rect x="0" y="9" width="16" height="1.3" fill="#bdbdbd"/><rect x="2" y="12" width="12" height="1.3" fill="#bdbdbd"/></svg>
<svg style="left:1831px;top:656px;" width="17" height="15" viewBox="0 0 17 15"><rect x="0" y="0" width="15" height="1.3" fill="#bdbdbd"/><rect x="0" y="3" width="15" height="1.3" fill="#bdbdbd"/><rect x="0" y="6" width="15" height="1.3" fill="#bdbdbd"/><rect x="0" y="9" width="15" height="1.3" fill="#bdbdbd"/><rect x="3" y="12" width="12" height="1.3" fill="#bdbdbd"/></svg>
<svg style="left:1861px;top:656px;" width="17" height="15" viewBox="0 0 17 15"><rect x="0" y="0" width="15" height="1.3" fill="#bdbdbd"/><rect x="0" y="3" width="15" height="1.3" fill="#bdbdbd"/><rect x="0" y="6" width="15" height="1.3" fill="#bdbdbd"/><rect x="0" y="9" width="15" height="1.3" fill="#bdbdbd"/><rect x="0" y="12" width="15" height="1.3" fill="#bdbdbd"/></svg>
<div style="left:1699px;top:679px;width:180px;height:2px;background:#2e2e2e;"></div>
<svg style="left:1699px;top:684px;" width="16" height="14" viewBox="0 0 16 14"><path d="M0 6.5H6M4 4.5L6.5 6.5L4 8.5" stroke="#bdbdbd" stroke-width="1.1" fill="none"/><rect x="7" y="0" width="1" height="13" fill="#bdbdbd"/><path d="M10 1.5H15M10 4.5H13M10 7.5H15M10 10.5H13" stroke="#bdbdbd" stroke-width="1"/></svg>
<svg style="left:1699px;top:702px;" width="16" height="14" viewBox="0 0 16 14"><rect x="7" y="0" width="1" height="13" fill="#bdbdbd"/><path d="M0 1.5H5M2 4.5H5M0 7.5H5M2 10.5H5" stroke="#bdbdbd" stroke-width="1"/><path d="M15.5 6.5H10M12 4.5L9.5 6.5L12 8.5" stroke="#bdbdbd" stroke-width="1.1" fill="none"/></svg>
<svg style="left:1770px;top:684px;" width="17" height="14" viewBox="0 0 17 14"><path d="M0 2.5H5M3 0.5L5.5 2.5L3 4.5" stroke="#bdbdbd" stroke-width="1.1" fill="none"/><rect x="7" y="0.5" width="8" height="4.5" fill="none" stroke="#bdbdbd" stroke-width="1"/><path d="M7 7.5H15M7 10.5H15M7 13.5H12" stroke="#bdbdbd" stroke-width="1"/></svg>
<svg style="left:1770px;top:702px;" width="17" height="14" viewBox="0 0 17 14"><path d="M8 0.5H13M7 3.5H15M7 6.5H15" stroke="#bdbdbd" stroke-width="1"/><path d="M0 10.5H5M3 8.5L5.5 10.5L3 12.5" stroke="#bdbdbd" stroke-width="1.1" fill="none"/><rect x="7" y="8.5" width="8" height="4.5" fill="none" stroke="#bdbdbd" stroke-width="1"/></svg>
<svg style="left:1836px;top:684px;" width="17" height="14" viewBox="0 0 17 14"><path d="M0 2.5H5M3 0.5L5.5 2.5L3 4.5" stroke="#bdbdbd" stroke-width="1.1" fill="none"/><path d="M8 2.5H16M8 5.5H16M8 8.5H16M8 11.5H16" stroke="#bdbdbd" stroke-width="1"/></svg>
<span style="left:1720.00px;top:683.99px;font-size:11px;line-height:11px;color:#3a91ee;transform:scaleX(0.9807);transform-origin:0 0;">0</span>
<span style="left:1793.00px;top:683.99px;font-size:11px;line-height:11px;color:#3a91ee;transform:scaleX(0.9807);transform-origin:0 0;">0</span>
<span style="left:1860.00px;top:683.99px;font-size:11px;line-height:11px;color:#3a91ee;transform:scaleX(0.9807);transform-origin:0 0;">0</span>
<span style="left:1720.00px;top:697.69px;font-size:11px;line-height:11px;color:#3a91ee;transform:scaleX(0.9807);transform-origin:0 0;">0</span>
<span style="left:1793.00px;top:700.69px;font-size:11px;line-height:11px;color:#3a91ee;transform:scaleX(0.9807);transform-origin:0 0;">0</span>
<span style="left:1730.00px;top:686.19px;font-size:11px;line-height:11px;color:#8a8a8a;transform:scaleX(0.9899);transform-origin:0 0;">px</span>
<span style="left:1803.00px;top:686.19px;font-size:11px;line-height:11px;color:#8a8a8a;transform:scaleX(0.9899);transform-origin:0 0;">px</span>
<span style="left:1870.00px;top:686.19px;font-size:11px;line-height:11px;color:#8a8a8a;transform:scaleX(0.9899);transform-origin:0 0;">px</span>
<span style="left:1730.00px;top:701.19px;font-size:11px;line-height:11px;color:#8a8a8a;transform:scaleX(0.9899);transform-origin:0 0;">px</span>
<span style="left:1803.00px;top:704.19px;font-size:11px;line-height:11px;color:#8a8a8a;transform:scaleX(0.9899);transform-origin:0 0;">px</span>
<div style="left:1836px;top:702.8px;width:20px;height:21.2px;background:#151515;border:1px solid #2b2b2b;border-radius:3px"></div>
<svg style="left:1838px;top:707px;" width="17" height="13" viewBox="0 0 17 13"><path d="M0.5 2.5V10.5L5.5 6.5Z" fill="#3390e8"/><path d="M10 1H15.5M11.2 1V12M14 1V12" stroke="#3390e8" stroke-width="1.4"/><path d="M11 1A3 3 0 0 0 11 7.5Z" fill="#3390e8"/></svg>
<svg style="left:1861px;top:707px;" width="17" height="13" viewBox="0 0 17 13"><path d="M16 2.5V10.5L11 6.5Z" fill="#bdbdbd"/><path d="M1 1H6.5M2.2 1V12M5 1V12" stroke="#bdbdbd" stroke-width="1.4"/><path d="M2 1A3 3 0 0 0 2 7.5Z" fill="#bdbdbd"/></svg>
<div style="left:1692px;top:771px;width:206px;height:1px;background:#191919;"></div>
<span style="left:1705.40px;top:781.99px;font-size:11px;line-height:11px;color:#d0d0d0;transform:scaleX(0.9417);transform-origin:0 0;">Brushes</span>
<svg style="left:1879px;top:783px;" width="9" height="8" viewBox="0 0 9 8"><path d="M0 0.5H9M0 3.5H9M0 6.5H9" stroke="#c8c8c8" stroke-width="1.1"/></svg>
<div style="left:1703.3px;top:811.4px;width:131.7px;height:79.3px;background:#262626;border-top:1px solid #0c0c0c;border-left:1px solid #0c0c0c;border-bottom:1px solid #0c0c0c"></div>
<svg style="left:1704px;top:812px;" width="131" height="78" viewBox="0 0 131 78"><rect x="31.5" y="0" width="1" height="79" fill="#1c1c1c"/><rect x="63.5" y="0" width="1" height="79" fill="#1c1c1c"/><rect x="95.6" y="0" width="1" height="79" fill="#1c1c1c"/><rect x="127.7" y="0" width="1" height="79" fill="#1c1c1c"/><rect x="0" y="31" width="131" height="1" fill="#1c1c1c"/><rect x="0" y="63" width="131" height="1" fill="#1c1c1c"/></svg>
<div style="left:1767.7px;top:875.4px;width:31px;height:15px;background:#3a3a3a;"></div>
<svg style="left:1712.5px;top:815.5px;" width="12" height="12" viewBox="0 0 12 12"><circle cx="6" cy="6" r="0.8" fill="#a8a8a8"/></svg>
<svg style="left:1744.5px;top:815.5px;" width="12" height="12" viewBox="0 0 12 12"><circle cx="6" cy="6" r="1.2" fill="#a8a8a8"/></svg>
<svg style="left:1776.5px;top:815.5px;" width="12" height="12" viewBox="0 0 12 12"><circle cx="6" cy="6" r="2.8" fill="#a8a8a8"/></svg>
<svg style="left:1808.5px;top:815.5px;" width="12" height="12" viewBox="0 0 12 12"><circle cx="6" cy="6" r="4.6" fill="#a8a8a8"/></svg>
<span style="left:1715.72px;top:831.03px;font-size:10px;line-height:10px;color:#5a5a5a;">1</span>
<span style="left:1747.72px;top:831.03px;font-size:10px;line-height:10px;color:#5a5a5a;">3</span>
<span style="left:1779.72px;top:831.03px;font-size:10px;line-height:10px;color:#5a5a5a;">5</span>
<span style="left:1811.72px;top:831.03px;font-size:10px;line-height:10px;color:#5a5a5a;">9</span>
<svg style="left:1710.5px;top:845.5px;" width="16" height="16" viewBox="0 0 16 16"><circle cx="8" cy="8" r="6.3" fill="#a8a8a8"/></svg>
<svg style="left:1742.5px;top:845.5px;" width="16" height="16" viewBox="0 0 16 16"><circle cx="8" cy="8" r="6.3" fill="#a8a8a8"/></svg>
<svg style="left:1774.5px;top:845.5px;" width="16" height="16" viewBox="0 0 16 16"><circle cx="8" cy="8" r="1.2" fill="#a8a8a8"/></svg>
<div style="left:1810px;top:849px;width:9px;height:9px;border-radius:50%;background:radial-gradient(circle,rgba(200,200,200,0.9) 0,rgba(150,150,150,0.5) 35%,rgba(38,38,38,0) 72%)"></div>
<span style="left:1712.94px;top:862.43px;font-size:10px;line-height:10px;color:#5a5a5a;">13</span>
<span style="left:1744.94px;top:862.43px;font-size:10px;line-height:10px;color:#5a5a5a;">19</span>
<span style="left:1779.72px;top:862.43px;font-size:10px;line-height:10px;color:#5a5a5a;">5</span>
<span style="left:1811.72px;top:862.43px;font-size:10px;line-height:10px;color:#5a5a5a;">9</span>
<div style="left:1712.5px;top:879px;width:12px;height:12px;border-radius:50%;background:radial-gradient(circle,rgba(230,230,230,0.95) 0,rgba(170,170,170,0.6) 35%,rgba(60,60,60,0) 72%)"></div>
<div style="left:1744.5px;top:879px;width:12px;height:12px;border-radius:50%;background:radial-gradient(circle,rgba(230,230,230,0.95) 0,rgba(170,170,170,0.6) 35%,rgba(60,60,60,0) 72%)"></div>
<div style="left:1776.5px;top:879px;width:12px;height:12px;border-radius:50%;background:radial-gradient(circle,rgba(230,230,230,0.95) 0,rgba(170,170,170,0.6) 35%,rgba(60,60,60,0) 72%)"></div>
<div style="left:1808.5px;top:879px;width:12px;height:12px;border-radius:50%;background:radial-gradient(circle,rgba(230,230,230,0.95) 0,rgba(170,170,170,0.6) 35%,rgba(60,60,60,0) 72%)"></div>
<span style="left:1729.72px;top:900.09px;font-size:11px;line-height:11px;color:#525252;">Diameter:</span>
<span style="left:1783.00px;top:900.09px;font-size:11px;line-height:11px;color:#525252;">21  px</span>
<span style="left:1746.21px;top:919.89px;font-size:11px;line-height:11px;color:#525252;">Angle:</span>
<span style="left:1783.00px;top:919.89px;font-size:11px;line-height:11px;color:#525252;">0  °</span>
<span style="left:1718.69px;top:939.19px;font-size:11px;line-height:11px;color:#525252;">Roundness:</span>
<span style="left:1783.00px;top:939.19px;font-size:11px;line-height:11px;color:#525252;">100  %</span>
<span style="left:1727.26px;top:957.89px;font-size:11px;line-height:11px;color:#525252;">Hardness:</span>
<span style="left:1783.00px;top:957.89px;font-size:11px;line-height:11px;color:#525252;">0  %</span>
<div style="left:1718px;top:975.3px;width:14px;height:13px;background:#3e3e3e;border-radius:2px"></div>
<svg style="left:1719px;top:977px;" width="12" height="10" viewBox="0 0 12 10"><path d="M2 5L5 8L10.5 2" stroke="#1e1e1e" stroke-width="1.6" fill="none"/></svg>
<span style="left:1736.40px;top:976.99px;font-size:11px;line-height:11px;color:#525252;transform:scaleX(0.9484);transform-origin:0 0;">Spacing:</span>
<span style="left:1783.00px;top:976.99px;font-size:11px;line-height:11px;color:#525252;">25  %</span>
<div style="left:1826.4px;top:902.6px;width:66.4px;height:66.2px;background:#282828;border:1px solid #0e0e0e"></div>
<div style="left:1849px;top:925px;width:21px;height:21px;border-radius:50%;background:radial-gradient(circle,rgba(240,240,240,1) 0,rgba(180,180,180,0.7) 30%,rgba(40,40,40,0) 72%)"></div>
<svg style="left:1840px;top:978px;" width="13" height="12" viewBox="0 0 13 12"><path d="M1.5 0.5H12.5V11.5H4.5V8.5H1.5Z" fill="#474747"/><path d="M0.5 8.5H4L4 12Z" fill="#474747"/></svg>
<svg style="left:1866px;top:977px;" width="12" height="14" viewBox="0 0 12 14"><path d="M1 3H11M4.5 3V1.2H7.5V3M2.5 4V13H9.5V4M4.5 5.5V11.5M6 5.5V11.5M7.5 5.5V11.5" stroke="#474747" stroke-width="1" fill="none"/></svg>
<div style="left:1692px;top:996px;width:206px;height:14px;overflow:hidden"><span style="position:absolute;left:12.5px;top:5px;font-size:11px;line-height:11px;color:#4e4e4e">Brush Dynamics</span></div>
<div style="left:1792px;top:1006.5px;width:103px;height:2px;background:#3a3a3a;"></div>
<svg style="left:134px;top:86px;" width="10" height="11" viewBox="0 0 10 11"><path d="M2.5 5V3.2A2.5 2.5 0 0 1 7.5 3.2" fill="none" stroke="#a0a0a0" stroke-width="1.4"/><rect x="1" y="5" width="8" height="5.5" fill="#a0a0a0"/><rect x="4.3" y="6.5" width="1.4" height="2.5" fill="#232323"/></svg>
<svg style="left:303px;top:90px;" width="9" height="8" viewBox="0 0 9 8"><path d="M0 1H9M0 4H9M0 7H9" stroke="#c8c8c8" stroke-width="1.2"/></svg>
<svg style="left:420px;top:86px;" width="10" height="11" viewBox="0 0 10 11"><path d="M2.5 5V3.2A2.5 2.5 0 0 1 7.5 3.2" fill="none" stroke="#a0a0a0" stroke-width="1.4"/><rect x="1" y="5" width="8" height="5.5" fill="#a0a0a0"/><rect x="4.3" y="6.5" width="1.4" height="2.5" fill="#232323"/></svg>
<svg style="left:541px;top:90px;" width="9" height="8" viewBox="0 0 9 8"><path d="M0 1H9M0 4H9M0 7H9" stroke="#c8c8c8" stroke-width="1.2"/></svg>
<svg style="left:442px;top:113px;" width="6" height="10" viewBox="0 0 6 10"><path d="M5 1L1 5L5 9" stroke="#a8a8a8" stroke-width="1.1" fill="none"/></svg>
<svg style="left:435px;top:553px;" width="9" height="6" viewBox="0 0 9 6"><path d="M0.5 0.5L4.5 4.5L8.5 0.5" stroke="#bdbdbd" stroke-width="1.1" fill="none"/></svg>
<svg style="left:532px;top:553px;" width="9" height="6" viewBox="0 0 9 6"><path d="M0.5 0.5L4.5 4.5L8.5 0.5" stroke="#bdbdbd" stroke-width="1.1" fill="none"/></svg>
<div style="left:453px;top:549px;width:2px;height:16px;background:#2e2e2e;"></div>
<div style="left:550px;top:549px;width:2px;height:16px;background:#2e2e2e;"></div>
<div style="left:556.2px;top:547px;width:21.3px;height:18.1px;background:#171717;border-radius:3px"></div>
<svg style="left:559px;top:549px;" width="17" height="16" viewBox="0 0 17 16"><path d="M13 9.5V1.5H1.5V12.5H8" fill="none" stroke="#b8b8b8" stroke-width="1.2"/><path d="M8 3L4.5 7.5H7L5.5 11L9.5 6.5H7Z" fill="#b8b8b8"/><path d="M9.5 11.5H15.5L12.5 14.5Z" fill="#b8b8b8"/></svg>
<svg style="left:581px;top:550px;" width="15" height="13" viewBox="0 0 15 13"><rect x="0.7" y="0.7" width="13.6" height="11" fill="#3a3a3a" stroke="#b8b8b8" stroke-width="1.2"/><rect x="1.5" y="1.5" width="2.75" height="2.75" fill="#777"/><rect x="1.5" y="7.0" width="2.75" height="2.75" fill="#777"/><rect x="4.25" y="4.25" width="2.75" height="2.75" fill="#777"/><rect x="7.0" y="1.5" width="2.75" height="2.75" fill="#777"/><rect x="7.0" y="7.0" width="2.75" height="2.75" fill="#777"/><rect x="9.75" y="4.25" width="2.75" height="2.75" fill="#777"/><rect x="12.5" y="1.5" width="2.75" height="2.75" fill="#777"/><rect x="12.5" y="7.0" width="2.75" height="2.75" fill="#777"/></svg>
<svg style="left:603px;top:549px;" width="16" height="14" viewBox="0 0 16 14"><path d="M1.5 12.5V5.5L6.5 1H14.5V12.5Z" fill="none" stroke="#b8b8b8" stroke-width="1.2"/><circle cx="1.5" cy="5.5" r="1.1" fill="#b8b8b8"/><circle cx="6.5" cy="1.2" r="1.1" fill="#b8b8b8"/><circle cx="14.5" cy="1.2" r="1.1" fill="#b8b8b8"/><circle cx="14.5" cy="12.5" r="1.1" fill="#b8b8b8"/><circle cx="1.5" cy="12.5" r="1.1" fill="#b8b8b8"/><circle cx="14.5" cy="7" r="0.9" fill="#b8b8b8"/></svg>
<svg style="left:626px;top:550px;" width="15" height="13" viewBox="0 0 15 13"><rect x="0.7" y="0.7" width="13.6" height="11.6" fill="none" stroke="#b8b8b8" stroke-width="1.2"/><rect x="4" y="4" width="7" height="5" fill="#b8b8b8"/></svg>
<svg style="left:646px;top:548px;" width="17" height="17" viewBox="0 0 17 17"><rect x="1.5" y="2" width="13" height="9.5" fill="none" stroke="#b8b8b8" stroke-width="1.2"/><path d="M8 0.5V13.5M0 6.8H3M13 6.8H16.5M6.5 6.8H9.5" stroke="#b8b8b8" stroke-width="1.1"/><path d="M10.5 13.5H15.5L13 16Z" fill="#b8b8b8"/></svg>
<div style="left:670px;top:549px;width:2px;height:16px;background:#2e2e2e;"></div>
<svg style="left:679px;top:548px;" width="17" height="17" viewBox="0 0 17 17"><circle cx="7.5" cy="4.5" r="3" fill="#f01010"/><circle cx="5" cy="8.8" r="3" fill="#10c010"/><circle cx="10.5" cy="8.5" r="3" fill="#3b6cff"/><path d="M10.5 13.5H15L12.75 16Z" fill="#b8b8b8"/></svg>
<svg style="left:702px;top:549px;" width="14" height="14" viewBox="0 0 14 14"><circle cx="7" cy="7" r="6" fill="#b8b8b8"/><path d="M7 1L5.5 6M13 7L8 5.5M7 13L8.5 8M1 7L6 8.5M2.8 2.8L6 6M11.2 2.8L8 6M11.2 11.2L8 8M2.8 11.2L6 8" stroke="#232323" stroke-width="0.9"/><circle cx="7" cy="7" r="2" fill="#232323"/></svg>
<div style="left:758px;top:549px;width:2px;height:16px;background:#2e2e2e;"></div>
<svg style="left:767px;top:550px;" width="16" height="13" viewBox="0 0 16 13"><path d="M1 3.5H4.5L6 1.5H10L11.5 3.5H15V12.5H1Z" fill="#b8b8b8"/><circle cx="8" cy="8" r="2.8" fill="#232323"/><circle cx="8" cy="8" r="1.6" fill="#b8b8b8"/></svg>
<svg style="left:789px;top:549px;" width="16" height="14" viewBox="0 0 16 14"><path d="M0.5 9C3 5.5 9 5.5 11.5 9C9 12.5 3 12.5 0.5 9Z" fill="#444"/><circle cx="6" cy="9" r="1.8" fill="#232323"/><rect x="9" y="1.5" width="6" height="5" fill="none" stroke="#444" stroke-width="1.1"/><circle cx="12" cy="4" r="1.2" fill="#444"/></svg>
<div style="left:812px;top:549px;width:2px;height:16px;background:#2e2e2e;"></div>
<div style="left:892px;top:549px;width:2px;height:16px;background:#2e2e2e;"></div>
</body></html>
